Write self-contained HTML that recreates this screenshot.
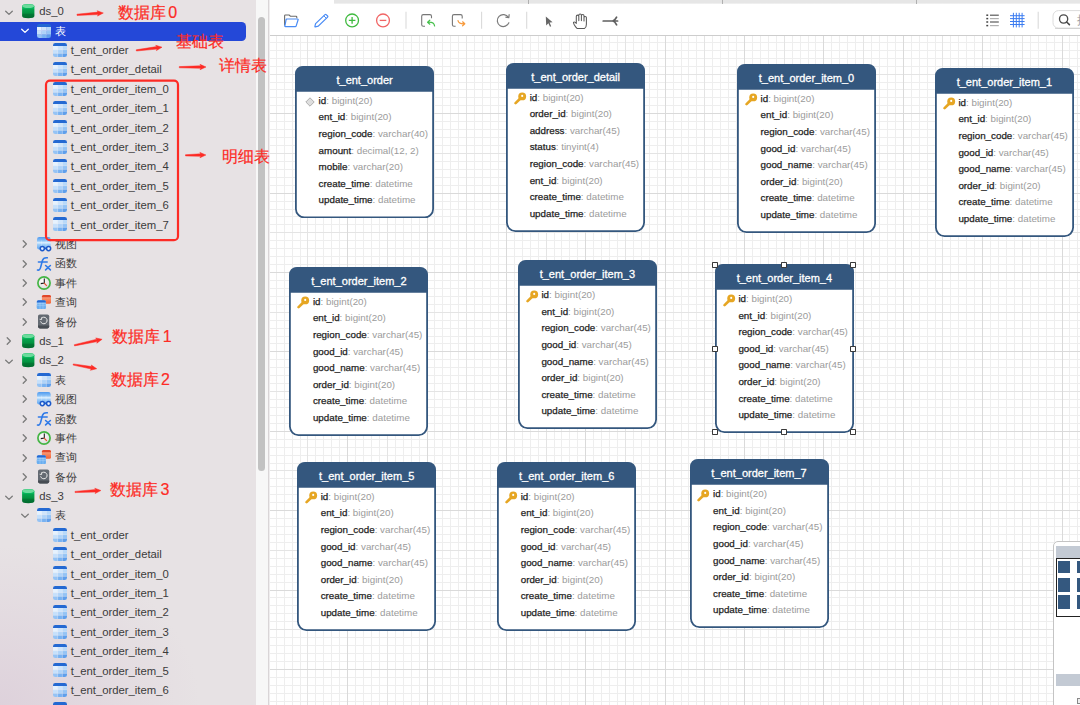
<!DOCTYPE html><html><head><meta charset="utf-8"><style>
html,body{margin:0;padding:0;width:1080px;height:705px;overflow:hidden;background:#fff}
body{position:relative;font-family:"Liberation Sans", sans-serif}
.ic{position:absolute;overflow:visible}
.st{position:absolute;font-size:11.3px;line-height:19px;white-space:nowrap}
.an{position:absolute;font-size:16px;line-height:20px;color:#fd2b25;white-space:nowrap;letter-spacing:0px;-webkit-text-stroke:0.2px #fd2b25}
.tb{position:absolute}
.th{position:absolute;left:0;width:100%;height:26px;color:#fff;font-size:11px;text-align:center;line-height:26px;-webkit-text-stroke:0.3px #fff}
.tbody{position:absolute;left:0;width:100%}
.fr{position:relative;height:16.61px;line-height:16.61px;padding-left:23.5px;font-size:9.8px;white-space:nowrap}
.fn{color:#1e1e1e;-webkit-text-stroke:0.25px #1e1e1e}
.ft{color:#9b9b9b}
.hd{position:absolute;width:6.3px;height:6.3px;box-sizing:border-box;border:1.2px solid #3a3a3a;background:#fff;border-radius:0.8px}
</style></head><body><div style="position:absolute;left:0;top:0;width:255.5px;height:705px;background:#e7e2e4"></div><div style="position:absolute;left:0;top:455px;width:255.5px;height:250px;background:radial-gradient(ellipse 200px 160px at 0px 250px, rgba(214,196,212,0.55), rgba(214,196,212,0) 100%)"></div><div style="position:absolute;left:-6px;top:21.7px;width:251.6px;height:19.3px;background:#2448d8;border-radius:4.5px"></div><svg class="ic" style="left:4.8px;top:10.05px" width="8" height="6" viewBox="0 0 8 6"><path d="M0.7 1.2 L4 4.4 L7.3 1.2" stroke="#7b7b7b" stroke-width="1.3" fill="none" stroke-linecap="round" stroke-linejoin="round"/></svg><svg class="ic" style="left:21.8px;top:3.95px" width="13" height="15" viewBox="0 0 13 15">
<defs><clipPath id="dbc"><path d="M0.1 2.2 Q0.1 0 6.25 0 Q12.4 0 12.4 2.2 L12.4 12.1 Q12.4 14.3 6.25 14.3 Q0.1 14.3 0.1 12.1 Z"/></clipPath>
<linearGradient id="dbg" x1="0" y1="0" x2="0" y2="1"><stop offset="0" stop-color="#10c264"/><stop offset="0.33" stop-color="#03b458"/><stop offset="0.36" stop-color="#06a24d"/><stop offset="0.62" stop-color="#03923f"/><stop offset="0.66" stop-color="#027a35"/><stop offset="1" stop-color="#03692d"/></linearGradient></defs>
<g clip-path="url(#dbc)"><rect x="0" y="0" width="13" height="15" fill="url(#dbg)"/></g>
<ellipse cx="6.25" cy="2.1" rx="6.05" ry="1.9" fill="#6cdb9d"/>
</svg><div class="st" style="left:39.3px;top:2.25px;color:#3b3b3b">ds_0</div><svg class="ic" style="left:20.6px;top:28.44px" width="8" height="6" viewBox="0 0 8 6"><path d="M0.7 1.2 L4 4.4 L7.3 1.2" stroke="#ffffff" stroke-width="1.3" fill="none" stroke-linecap="round" stroke-linejoin="round"/></svg><svg class="ic" style="left:37px;top:24.24px" width="14" height="14" viewBox="0 0 14 14">
<defs><clipPath id="tic"><rect x="0" y="0" width="14" height="14" rx="2.3"/></clipPath></defs>
<g clip-path="url(#tic)"><rect x="0.00" y="3.00" width="4.72" height="3.75" fill="#e6f2fe"/><rect x="4.67" y="3.00" width="4.71" height="3.75" fill="#cfe5fb"/><rect x="9.33" y="3.00" width="4.72" height="3.75" fill="#b9d9f9"/><rect x="0.00" y="6.70" width="4.72" height="3.70" fill="#c6e0fb"/><rect x="4.67" y="6.70" width="4.71" height="3.70" fill="#aed2f8"/><rect x="9.33" y="6.70" width="4.72" height="3.70" fill="#94c3f5"/><rect x="0.00" y="10.35" width="4.72" height="3.70" fill="#95c4f5"/><rect x="4.67" y="10.35" width="4.71" height="3.70" fill="#78b2f1"/><rect x="9.33" y="10.35" width="4.72" height="3.70" fill="#5f9fec"/>
<rect x="0" y="0" width="14" height="3.0" fill="#2469d2"/>
<path d="M4.67 3 V14 M9.33 3 V14 M0 6.7 H14 M0 10.35 H14" stroke="#ffffff" stroke-width="0.45" opacity="0.55"/>
</g></svg><div class="st" style="left:54.6px;top:21.64px;color:#ffffff">表</div><svg class="ic" style="left:52.9px;top:42.84px" width="14" height="14" viewBox="0 0 14 14">
<defs><clipPath id="tic"><rect x="0" y="0" width="14" height="14" rx="2.3"/></clipPath></defs>
<g clip-path="url(#tic)"><rect x="0.00" y="3.00" width="4.72" height="3.75" fill="#e6f2fe"/><rect x="4.67" y="3.00" width="4.71" height="3.75" fill="#cfe5fb"/><rect x="9.33" y="3.00" width="4.72" height="3.75" fill="#b9d9f9"/><rect x="0.00" y="6.70" width="4.72" height="3.70" fill="#c6e0fb"/><rect x="4.67" y="6.70" width="4.71" height="3.70" fill="#aed2f8"/><rect x="9.33" y="6.70" width="4.72" height="3.70" fill="#94c3f5"/><rect x="0.00" y="10.35" width="4.72" height="3.70" fill="#95c4f5"/><rect x="4.67" y="10.35" width="4.71" height="3.70" fill="#78b2f1"/><rect x="9.33" y="10.35" width="4.72" height="3.70" fill="#5f9fec"/>
<rect x="0" y="0" width="14" height="3.0" fill="#2469d2"/>
<path d="M4.67 3 V14 M9.33 3 V14 M0 6.7 H14 M0 10.35 H14" stroke="#ffffff" stroke-width="0.45" opacity="0.55"/>
</g></svg><div class="st" style="left:70.8px;top:41.04px;color:#3b3b3b">t_ent_order</div><svg class="ic" style="left:52.9px;top:62.23px" width="14" height="14" viewBox="0 0 14 14">
<defs><clipPath id="tic"><rect x="0" y="0" width="14" height="14" rx="2.3"/></clipPath></defs>
<g clip-path="url(#tic)"><rect x="0.00" y="3.00" width="4.72" height="3.75" fill="#e6f2fe"/><rect x="4.67" y="3.00" width="4.71" height="3.75" fill="#cfe5fb"/><rect x="9.33" y="3.00" width="4.72" height="3.75" fill="#b9d9f9"/><rect x="0.00" y="6.70" width="4.72" height="3.70" fill="#c6e0fb"/><rect x="4.67" y="6.70" width="4.71" height="3.70" fill="#aed2f8"/><rect x="9.33" y="6.70" width="4.72" height="3.70" fill="#94c3f5"/><rect x="0.00" y="10.35" width="4.72" height="3.70" fill="#95c4f5"/><rect x="4.67" y="10.35" width="4.71" height="3.70" fill="#78b2f1"/><rect x="9.33" y="10.35" width="4.72" height="3.70" fill="#5f9fec"/>
<rect x="0" y="0" width="14" height="3.0" fill="#2469d2"/>
<path d="M4.67 3 V14 M9.33 3 V14 M0 6.7 H14 M0 10.35 H14" stroke="#ffffff" stroke-width="0.45" opacity="0.55"/>
</g></svg><div class="st" style="left:70.8px;top:60.43px;color:#3b3b3b">t_ent_order_detail</div><svg class="ic" style="left:52.9px;top:81.63px" width="14" height="14" viewBox="0 0 14 14">
<defs><clipPath id="tic"><rect x="0" y="0" width="14" height="14" rx="2.3"/></clipPath></defs>
<g clip-path="url(#tic)"><rect x="0.00" y="3.00" width="4.72" height="3.75" fill="#e6f2fe"/><rect x="4.67" y="3.00" width="4.71" height="3.75" fill="#cfe5fb"/><rect x="9.33" y="3.00" width="4.72" height="3.75" fill="#b9d9f9"/><rect x="0.00" y="6.70" width="4.72" height="3.70" fill="#c6e0fb"/><rect x="4.67" y="6.70" width="4.71" height="3.70" fill="#aed2f8"/><rect x="9.33" y="6.70" width="4.72" height="3.70" fill="#94c3f5"/><rect x="0.00" y="10.35" width="4.72" height="3.70" fill="#95c4f5"/><rect x="4.67" y="10.35" width="4.71" height="3.70" fill="#78b2f1"/><rect x="9.33" y="10.35" width="4.72" height="3.70" fill="#5f9fec"/>
<rect x="0" y="0" width="14" height="3.0" fill="#2469d2"/>
<path d="M4.67 3 V14 M9.33 3 V14 M0 6.7 H14 M0 10.35 H14" stroke="#ffffff" stroke-width="0.45" opacity="0.55"/>
</g></svg><div class="st" style="left:70.8px;top:79.83px;color:#3b3b3b">t_ent_order_item_0</div><svg class="ic" style="left:52.9px;top:101.02px" width="14" height="14" viewBox="0 0 14 14">
<defs><clipPath id="tic"><rect x="0" y="0" width="14" height="14" rx="2.3"/></clipPath></defs>
<g clip-path="url(#tic)"><rect x="0.00" y="3.00" width="4.72" height="3.75" fill="#e6f2fe"/><rect x="4.67" y="3.00" width="4.71" height="3.75" fill="#cfe5fb"/><rect x="9.33" y="3.00" width="4.72" height="3.75" fill="#b9d9f9"/><rect x="0.00" y="6.70" width="4.72" height="3.70" fill="#c6e0fb"/><rect x="4.67" y="6.70" width="4.71" height="3.70" fill="#aed2f8"/><rect x="9.33" y="6.70" width="4.72" height="3.70" fill="#94c3f5"/><rect x="0.00" y="10.35" width="4.72" height="3.70" fill="#95c4f5"/><rect x="4.67" y="10.35" width="4.71" height="3.70" fill="#78b2f1"/><rect x="9.33" y="10.35" width="4.72" height="3.70" fill="#5f9fec"/>
<rect x="0" y="0" width="14" height="3.0" fill="#2469d2"/>
<path d="M4.67 3 V14 M9.33 3 V14 M0 6.7 H14 M0 10.35 H14" stroke="#ffffff" stroke-width="0.45" opacity="0.55"/>
</g></svg><div class="st" style="left:70.8px;top:99.22px;color:#3b3b3b">t_ent_order_item_1</div><svg class="ic" style="left:52.9px;top:120.41px" width="14" height="14" viewBox="0 0 14 14">
<defs><clipPath id="tic"><rect x="0" y="0" width="14" height="14" rx="2.3"/></clipPath></defs>
<g clip-path="url(#tic)"><rect x="0.00" y="3.00" width="4.72" height="3.75" fill="#e6f2fe"/><rect x="4.67" y="3.00" width="4.71" height="3.75" fill="#cfe5fb"/><rect x="9.33" y="3.00" width="4.72" height="3.75" fill="#b9d9f9"/><rect x="0.00" y="6.70" width="4.72" height="3.70" fill="#c6e0fb"/><rect x="4.67" y="6.70" width="4.71" height="3.70" fill="#aed2f8"/><rect x="9.33" y="6.70" width="4.72" height="3.70" fill="#94c3f5"/><rect x="0.00" y="10.35" width="4.72" height="3.70" fill="#95c4f5"/><rect x="4.67" y="10.35" width="4.71" height="3.70" fill="#78b2f1"/><rect x="9.33" y="10.35" width="4.72" height="3.70" fill="#5f9fec"/>
<rect x="0" y="0" width="14" height="3.0" fill="#2469d2"/>
<path d="M4.67 3 V14 M9.33 3 V14 M0 6.7 H14 M0 10.35 H14" stroke="#ffffff" stroke-width="0.45" opacity="0.55"/>
</g></svg><div class="st" style="left:70.8px;top:118.61px;color:#3b3b3b">t_ent_order_item_2</div><svg class="ic" style="left:52.9px;top:139.81px" width="14" height="14" viewBox="0 0 14 14">
<defs><clipPath id="tic"><rect x="0" y="0" width="14" height="14" rx="2.3"/></clipPath></defs>
<g clip-path="url(#tic)"><rect x="0.00" y="3.00" width="4.72" height="3.75" fill="#e6f2fe"/><rect x="4.67" y="3.00" width="4.71" height="3.75" fill="#cfe5fb"/><rect x="9.33" y="3.00" width="4.72" height="3.75" fill="#b9d9f9"/><rect x="0.00" y="6.70" width="4.72" height="3.70" fill="#c6e0fb"/><rect x="4.67" y="6.70" width="4.71" height="3.70" fill="#aed2f8"/><rect x="9.33" y="6.70" width="4.72" height="3.70" fill="#94c3f5"/><rect x="0.00" y="10.35" width="4.72" height="3.70" fill="#95c4f5"/><rect x="4.67" y="10.35" width="4.71" height="3.70" fill="#78b2f1"/><rect x="9.33" y="10.35" width="4.72" height="3.70" fill="#5f9fec"/>
<rect x="0" y="0" width="14" height="3.0" fill="#2469d2"/>
<path d="M4.67 3 V14 M9.33 3 V14 M0 6.7 H14 M0 10.35 H14" stroke="#ffffff" stroke-width="0.45" opacity="0.55"/>
</g></svg><div class="st" style="left:70.8px;top:138.01px;color:#3b3b3b">t_ent_order_item_3</div><svg class="ic" style="left:52.9px;top:159.20px" width="14" height="14" viewBox="0 0 14 14">
<defs><clipPath id="tic"><rect x="0" y="0" width="14" height="14" rx="2.3"/></clipPath></defs>
<g clip-path="url(#tic)"><rect x="0.00" y="3.00" width="4.72" height="3.75" fill="#e6f2fe"/><rect x="4.67" y="3.00" width="4.71" height="3.75" fill="#cfe5fb"/><rect x="9.33" y="3.00" width="4.72" height="3.75" fill="#b9d9f9"/><rect x="0.00" y="6.70" width="4.72" height="3.70" fill="#c6e0fb"/><rect x="4.67" y="6.70" width="4.71" height="3.70" fill="#aed2f8"/><rect x="9.33" y="6.70" width="4.72" height="3.70" fill="#94c3f5"/><rect x="0.00" y="10.35" width="4.72" height="3.70" fill="#95c4f5"/><rect x="4.67" y="10.35" width="4.71" height="3.70" fill="#78b2f1"/><rect x="9.33" y="10.35" width="4.72" height="3.70" fill="#5f9fec"/>
<rect x="0" y="0" width="14" height="3.0" fill="#2469d2"/>
<path d="M4.67 3 V14 M9.33 3 V14 M0 6.7 H14 M0 10.35 H14" stroke="#ffffff" stroke-width="0.45" opacity="0.55"/>
</g></svg><div class="st" style="left:70.8px;top:157.40px;color:#3b3b3b">t_ent_order_item_4</div><svg class="ic" style="left:52.9px;top:178.60px" width="14" height="14" viewBox="0 0 14 14">
<defs><clipPath id="tic"><rect x="0" y="0" width="14" height="14" rx="2.3"/></clipPath></defs>
<g clip-path="url(#tic)"><rect x="0.00" y="3.00" width="4.72" height="3.75" fill="#e6f2fe"/><rect x="4.67" y="3.00" width="4.71" height="3.75" fill="#cfe5fb"/><rect x="9.33" y="3.00" width="4.72" height="3.75" fill="#b9d9f9"/><rect x="0.00" y="6.70" width="4.72" height="3.70" fill="#c6e0fb"/><rect x="4.67" y="6.70" width="4.71" height="3.70" fill="#aed2f8"/><rect x="9.33" y="6.70" width="4.72" height="3.70" fill="#94c3f5"/><rect x="0.00" y="10.35" width="4.72" height="3.70" fill="#95c4f5"/><rect x="4.67" y="10.35" width="4.71" height="3.70" fill="#78b2f1"/><rect x="9.33" y="10.35" width="4.72" height="3.70" fill="#5f9fec"/>
<rect x="0" y="0" width="14" height="3.0" fill="#2469d2"/>
<path d="M4.67 3 V14 M9.33 3 V14 M0 6.7 H14 M0 10.35 H14" stroke="#ffffff" stroke-width="0.45" opacity="0.55"/>
</g></svg><div class="st" style="left:70.8px;top:176.80px;color:#3b3b3b">t_ent_order_item_5</div><svg class="ic" style="left:52.9px;top:197.99px" width="14" height="14" viewBox="0 0 14 14">
<defs><clipPath id="tic"><rect x="0" y="0" width="14" height="14" rx="2.3"/></clipPath></defs>
<g clip-path="url(#tic)"><rect x="0.00" y="3.00" width="4.72" height="3.75" fill="#e6f2fe"/><rect x="4.67" y="3.00" width="4.71" height="3.75" fill="#cfe5fb"/><rect x="9.33" y="3.00" width="4.72" height="3.75" fill="#b9d9f9"/><rect x="0.00" y="6.70" width="4.72" height="3.70" fill="#c6e0fb"/><rect x="4.67" y="6.70" width="4.71" height="3.70" fill="#aed2f8"/><rect x="9.33" y="6.70" width="4.72" height="3.70" fill="#94c3f5"/><rect x="0.00" y="10.35" width="4.72" height="3.70" fill="#95c4f5"/><rect x="4.67" y="10.35" width="4.71" height="3.70" fill="#78b2f1"/><rect x="9.33" y="10.35" width="4.72" height="3.70" fill="#5f9fec"/>
<rect x="0" y="0" width="14" height="3.0" fill="#2469d2"/>
<path d="M4.67 3 V14 M9.33 3 V14 M0 6.7 H14 M0 10.35 H14" stroke="#ffffff" stroke-width="0.45" opacity="0.55"/>
</g></svg><div class="st" style="left:70.8px;top:196.19px;color:#3b3b3b">t_ent_order_item_6</div><svg class="ic" style="left:52.9px;top:217.38px" width="14" height="14" viewBox="0 0 14 14">
<defs><clipPath id="tic"><rect x="0" y="0" width="14" height="14" rx="2.3"/></clipPath></defs>
<g clip-path="url(#tic)"><rect x="0.00" y="3.00" width="4.72" height="3.75" fill="#e6f2fe"/><rect x="4.67" y="3.00" width="4.71" height="3.75" fill="#cfe5fb"/><rect x="9.33" y="3.00" width="4.72" height="3.75" fill="#b9d9f9"/><rect x="0.00" y="6.70" width="4.72" height="3.70" fill="#c6e0fb"/><rect x="4.67" y="6.70" width="4.71" height="3.70" fill="#aed2f8"/><rect x="9.33" y="6.70" width="4.72" height="3.70" fill="#94c3f5"/><rect x="0.00" y="10.35" width="4.72" height="3.70" fill="#95c4f5"/><rect x="4.67" y="10.35" width="4.71" height="3.70" fill="#78b2f1"/><rect x="9.33" y="10.35" width="4.72" height="3.70" fill="#5f9fec"/>
<rect x="0" y="0" width="14" height="3.0" fill="#2469d2"/>
<path d="M4.67 3 V14 M9.33 3 V14 M0 6.7 H14 M0 10.35 H14" stroke="#ffffff" stroke-width="0.45" opacity="0.55"/>
</g></svg><div class="st" style="left:70.8px;top:215.58px;color:#3b3b3b">t_ent_order_item_7</div><svg class="ic" style="left:22px;top:240.28px" width="6" height="8" viewBox="0 0 6 8"><path d="M1.2 0.7 L4.4 4 L1.2 7.3" stroke="#7b7b7b" stroke-width="1.3" fill="none" stroke-linecap="round" stroke-linejoin="round"/></svg><svg class="ic" style="left:37px;top:236.78px" width="15" height="15" viewBox="0 0 15 15">
<defs><linearGradient id="vg" x1="0" y1="0" x2="0" y2="1"><stop offset="0" stop-color="#4f9af0"/><stop offset="0.3" stop-color="#8cc2f6"/><stop offset="0.45" stop-color="#dcefff"/><stop offset="0.6" stop-color="#9fcdf8"/><stop offset="1" stop-color="#5aa2f0"/></linearGradient></defs>
<rect x="0" y="0" width="13.7" height="12.6" rx="2.4" fill="url(#vg)"/>
<path d="M4.6 3.5 V12.6 M9.1 3.5 V12.6" stroke="#ffffff" stroke-width="0.45" opacity="0.5"/>
<circle cx="5.3" cy="11.6" r="2.05" fill="#e8f2ff" stroke="#1d59c9" stroke-width="1.5"/><circle cx="11.6" cy="11.6" r="2.05" fill="#e8f2ff" stroke="#1d59c9" stroke-width="1.5"/><path d="M7.3 11.3 H9.6" stroke="#1d59c9" stroke-width="1.6"/>
</svg><div class="st" style="left:54.6px;top:234.98px;color:#3b3b3b">视图</div><svg class="ic" style="left:22px;top:259.67px" width="6" height="8" viewBox="0 0 6 8"><path d="M1.2 0.7 L4.4 4 L1.2 7.3" stroke="#7b7b7b" stroke-width="1.3" fill="none" stroke-linecap="round" stroke-linejoin="round"/></svg><svg class="ic" style="left:37px;top:255.67px" width="15" height="15" viewBox="0 0 15 15">
<path d="M0.5 14 Q2.8 14.6 3.6 11.4 L5.4 4.6 Q6.4 1.4 10.3 1.8" stroke="#2f7ae8" stroke-width="1.6" fill="none" stroke-linecap="round"/>
<path d="M1.4 6.1 H10.2" stroke="#2f7ae8" stroke-width="1.5" stroke-linecap="round"/>
<path d="M8.6 9.5 L13.4 13.9 M13.4 9.5 L8.6 13.9" stroke="#2f7ae8" stroke-width="1.6" stroke-linecap="round"/>
</svg><div class="st" style="left:54.6px;top:254.37px;color:#3b3b3b">函数</div><svg class="ic" style="left:22px;top:279.07px" width="6" height="8" viewBox="0 0 6 8"><path d="M1.2 0.7 L4.4 4 L1.2 7.3" stroke="#7b7b7b" stroke-width="1.3" fill="none" stroke-linecap="round" stroke-linejoin="round"/></svg><svg class="ic" style="left:37px;top:275.57px" width="14" height="14" viewBox="0 0 14 14">
<defs><radialGradient id="cg" cx="0.4" cy="0.35" r="0.7"><stop offset="0" stop-color="#ffffff"/><stop offset="1" stop-color="#d8d8d8"/></radialGradient></defs>
<circle cx="7" cy="7" r="6.1" fill="url(#cg)" stroke="#45b545" stroke-width="1.7"/>
<path d="M7.3 2.6 V7 L3.8 7.6" stroke="#1e1e1e" stroke-width="1.1" fill="none"/>
<path d="M7 7 L9.8 9.9" stroke="#e5502e" stroke-width="1.1"/>
</svg><div class="st" style="left:54.6px;top:273.77px;color:#3b3b3b">事件</div><svg class="ic" style="left:22px;top:298.46px" width="6" height="8" viewBox="0 0 6 8"><path d="M1.2 0.7 L4.4 4 L1.2 7.3" stroke="#7b7b7b" stroke-width="1.3" fill="none" stroke-linecap="round" stroke-linejoin="round"/></svg><svg class="ic" style="left:37px;top:294.96px" width="15" height="14" viewBox="0 0 15 14">
<defs><linearGradient id="qg" x1="0" y1="0" x2="0" y2="1"><stop offset="0" stop-color="#f9b49a"/><stop offset="0.5" stop-color="#f7875e"/><stop offset="1" stop-color="#f0643a"/></linearGradient></defs>
<rect x="4.9" y="0" width="9.1" height="8.8" rx="1.6" fill="url(#qg)"/>
<path d="M4.9 1.6 Q4.9 0 6.5 0 H12.4 Q14 0 14 1.6 V2.2 H4.9 Z" fill="#e0482a"/>
<rect x="-0.2" y="5.2" width="9.1" height="8.8" rx="1.5" fill="#8fc4f6"/>
<rect x="-0.2" y="9.3" width="9.1" height="4.7" rx="1.2" fill="#6aaef0"/>
<path d="M-0.2 6.7 Q-0.2 5.2 1.3 5.2 H7.4 Q8.9 5.2 8.9 6.7 V7.6 H-0.2 Z" fill="#2469d2"/>
<path d="M3 7.6 V14 M6 7.6 V14 M-0.2 10.6 H8.9" stroke="#fff" stroke-width="0.45" opacity="0.5"/>
</svg><div class="st" style="left:54.6px;top:293.16px;color:#3b3b3b">查询</div><svg class="ic" style="left:22px;top:317.85px" width="6" height="8" viewBox="0 0 6 8"><path d="M1.2 0.7 L4.4 4 L1.2 7.3" stroke="#7b7b7b" stroke-width="1.3" fill="none" stroke-linecap="round" stroke-linejoin="round"/></svg><svg class="ic" style="left:37px;top:313.85px" width="14" height="15" viewBox="0 0 14 15">
<rect x="1" y="0.4" width="11.2" height="14" rx="1.8" fill="#646a72"/>
<path d="M1 11.6 H12.2 V12.6 Q12.2 14.4 10.4 14.4 H2.8 Q1 14.4 1 12.6 Z" fill="#474c53"/>
<path d="M4.2 4.4 A3.3 3.3 0 1 1 3.6 7.4" stroke="#ececec" stroke-width="1" fill="none"/>
<path d="M2.6 5.2 L4.6 5.6 L4.8 3.4" stroke="#ececec" stroke-width="0.9" fill="none"/>
</svg><div class="st" style="left:54.6px;top:312.55px;color:#3b3b3b">备份</div><svg class="ic" style="left:6px;top:337.45px" width="6" height="8" viewBox="0 0 6 8"><path d="M1.2 0.7 L4.4 4 L1.2 7.3" stroke="#7b7b7b" stroke-width="1.3" fill="none" stroke-linecap="round" stroke-linejoin="round"/></svg><svg class="ic" style="left:21.8px;top:333.65px" width="13" height="15" viewBox="0 0 13 15">
<defs><clipPath id="dbc"><path d="M0.1 2.2 Q0.1 0 6.25 0 Q12.4 0 12.4 2.2 L12.4 12.1 Q12.4 14.3 6.25 14.3 Q0.1 14.3 0.1 12.1 Z"/></clipPath>
<linearGradient id="dbg" x1="0" y1="0" x2="0" y2="1"><stop offset="0" stop-color="#10c264"/><stop offset="0.33" stop-color="#03b458"/><stop offset="0.36" stop-color="#06a24d"/><stop offset="0.62" stop-color="#03923f"/><stop offset="0.66" stop-color="#027a35"/><stop offset="1" stop-color="#03692d"/></linearGradient></defs>
<g clip-path="url(#dbc)"><rect x="0" y="0" width="13" height="15" fill="url(#dbg)"/></g>
<ellipse cx="6.25" cy="2.1" rx="6.05" ry="1.9" fill="#6cdb9d"/>
</svg><div class="st" style="left:39.3px;top:331.95px;color:#3b3b3b">ds_1</div><svg class="ic" style="left:4.8px;top:359.14px" width="8" height="6" viewBox="0 0 8 6"><path d="M0.7 1.2 L4 4.4 L7.3 1.2" stroke="#7b7b7b" stroke-width="1.3" fill="none" stroke-linecap="round" stroke-linejoin="round"/></svg><svg class="ic" style="left:21.8px;top:353.04px" width="13" height="15" viewBox="0 0 13 15">
<defs><clipPath id="dbc"><path d="M0.1 2.2 Q0.1 0 6.25 0 Q12.4 0 12.4 2.2 L12.4 12.1 Q12.4 14.3 6.25 14.3 Q0.1 14.3 0.1 12.1 Z"/></clipPath>
<linearGradient id="dbg" x1="0" y1="0" x2="0" y2="1"><stop offset="0" stop-color="#10c264"/><stop offset="0.33" stop-color="#03b458"/><stop offset="0.36" stop-color="#06a24d"/><stop offset="0.62" stop-color="#03923f"/><stop offset="0.66" stop-color="#027a35"/><stop offset="1" stop-color="#03692d"/></linearGradient></defs>
<g clip-path="url(#dbc)"><rect x="0" y="0" width="13" height="15" fill="url(#dbg)"/></g>
<ellipse cx="6.25" cy="2.1" rx="6.05" ry="1.9" fill="#6cdb9d"/>
</svg><div class="st" style="left:39.3px;top:351.34px;color:#3b3b3b">ds_2</div><svg class="ic" style="left:22px;top:376.04px" width="6" height="8" viewBox="0 0 6 8"><path d="M1.2 0.7 L4.4 4 L1.2 7.3" stroke="#7b7b7b" stroke-width="1.3" fill="none" stroke-linecap="round" stroke-linejoin="round"/></svg><svg class="ic" style="left:37px;top:372.54px" width="14" height="14" viewBox="0 0 14 14">
<defs><clipPath id="tic"><rect x="0" y="0" width="14" height="14" rx="2.3"/></clipPath></defs>
<g clip-path="url(#tic)"><rect x="0.00" y="3.00" width="4.72" height="3.75" fill="#e6f2fe"/><rect x="4.67" y="3.00" width="4.71" height="3.75" fill="#cfe5fb"/><rect x="9.33" y="3.00" width="4.72" height="3.75" fill="#b9d9f9"/><rect x="0.00" y="6.70" width="4.72" height="3.70" fill="#c6e0fb"/><rect x="4.67" y="6.70" width="4.71" height="3.70" fill="#aed2f8"/><rect x="9.33" y="6.70" width="4.72" height="3.70" fill="#94c3f5"/><rect x="0.00" y="10.35" width="4.72" height="3.70" fill="#95c4f5"/><rect x="4.67" y="10.35" width="4.71" height="3.70" fill="#78b2f1"/><rect x="9.33" y="10.35" width="4.72" height="3.70" fill="#5f9fec"/>
<rect x="0" y="0" width="14" height="3.0" fill="#2469d2"/>
<path d="M4.67 3 V14 M9.33 3 V14 M0 6.7 H14 M0 10.35 H14" stroke="#ffffff" stroke-width="0.45" opacity="0.55"/>
</g></svg><div class="st" style="left:54.6px;top:370.74px;color:#3b3b3b">表</div><svg class="ic" style="left:22px;top:395.43px" width="6" height="8" viewBox="0 0 6 8"><path d="M1.2 0.7 L4.4 4 L1.2 7.3" stroke="#7b7b7b" stroke-width="1.3" fill="none" stroke-linecap="round" stroke-linejoin="round"/></svg><svg class="ic" style="left:37px;top:391.93px" width="15" height="15" viewBox="0 0 15 15">
<defs><linearGradient id="vg" x1="0" y1="0" x2="0" y2="1"><stop offset="0" stop-color="#4f9af0"/><stop offset="0.3" stop-color="#8cc2f6"/><stop offset="0.45" stop-color="#dcefff"/><stop offset="0.6" stop-color="#9fcdf8"/><stop offset="1" stop-color="#5aa2f0"/></linearGradient></defs>
<rect x="0" y="0" width="13.7" height="12.6" rx="2.4" fill="url(#vg)"/>
<path d="M4.6 3.5 V12.6 M9.1 3.5 V12.6" stroke="#ffffff" stroke-width="0.45" opacity="0.5"/>
<circle cx="5.3" cy="11.6" r="2.05" fill="#e8f2ff" stroke="#1d59c9" stroke-width="1.5"/><circle cx="11.6" cy="11.6" r="2.05" fill="#e8f2ff" stroke="#1d59c9" stroke-width="1.5"/><path d="M7.3 11.3 H9.6" stroke="#1d59c9" stroke-width="1.6"/>
</svg><div class="st" style="left:54.6px;top:390.13px;color:#3b3b3b">视图</div><svg class="ic" style="left:22px;top:414.82px" width="6" height="8" viewBox="0 0 6 8"><path d="M1.2 0.7 L4.4 4 L1.2 7.3" stroke="#7b7b7b" stroke-width="1.3" fill="none" stroke-linecap="round" stroke-linejoin="round"/></svg><svg class="ic" style="left:37px;top:410.82px" width="15" height="15" viewBox="0 0 15 15">
<path d="M0.5 14 Q2.8 14.6 3.6 11.4 L5.4 4.6 Q6.4 1.4 10.3 1.8" stroke="#2f7ae8" stroke-width="1.6" fill="none" stroke-linecap="round"/>
<path d="M1.4 6.1 H10.2" stroke="#2f7ae8" stroke-width="1.5" stroke-linecap="round"/>
<path d="M8.6 9.5 L13.4 13.9 M13.4 9.5 L8.6 13.9" stroke="#2f7ae8" stroke-width="1.6" stroke-linecap="round"/>
</svg><div class="st" style="left:54.6px;top:409.52px;color:#3b3b3b">函数</div><svg class="ic" style="left:22px;top:434.22px" width="6" height="8" viewBox="0 0 6 8"><path d="M1.2 0.7 L4.4 4 L1.2 7.3" stroke="#7b7b7b" stroke-width="1.3" fill="none" stroke-linecap="round" stroke-linejoin="round"/></svg><svg class="ic" style="left:37px;top:430.72px" width="14" height="14" viewBox="0 0 14 14">
<defs><radialGradient id="cg" cx="0.4" cy="0.35" r="0.7"><stop offset="0" stop-color="#ffffff"/><stop offset="1" stop-color="#d8d8d8"/></radialGradient></defs>
<circle cx="7" cy="7" r="6.1" fill="url(#cg)" stroke="#45b545" stroke-width="1.7"/>
<path d="M7.3 2.6 V7 L3.8 7.6" stroke="#1e1e1e" stroke-width="1.1" fill="none"/>
<path d="M7 7 L9.8 9.9" stroke="#e5502e" stroke-width="1.1"/>
</svg><div class="st" style="left:54.6px;top:428.92px;color:#3b3b3b">事件</div><svg class="ic" style="left:22px;top:453.61px" width="6" height="8" viewBox="0 0 6 8"><path d="M1.2 0.7 L4.4 4 L1.2 7.3" stroke="#7b7b7b" stroke-width="1.3" fill="none" stroke-linecap="round" stroke-linejoin="round"/></svg><svg class="ic" style="left:37px;top:450.11px" width="15" height="14" viewBox="0 0 15 14">
<defs><linearGradient id="qg" x1="0" y1="0" x2="0" y2="1"><stop offset="0" stop-color="#f9b49a"/><stop offset="0.5" stop-color="#f7875e"/><stop offset="1" stop-color="#f0643a"/></linearGradient></defs>
<rect x="4.9" y="0" width="9.1" height="8.8" rx="1.6" fill="url(#qg)"/>
<path d="M4.9 1.6 Q4.9 0 6.5 0 H12.4 Q14 0 14 1.6 V2.2 H4.9 Z" fill="#e0482a"/>
<rect x="-0.2" y="5.2" width="9.1" height="8.8" rx="1.5" fill="#8fc4f6"/>
<rect x="-0.2" y="9.3" width="9.1" height="4.7" rx="1.2" fill="#6aaef0"/>
<path d="M-0.2 6.7 Q-0.2 5.2 1.3 5.2 H7.4 Q8.9 5.2 8.9 6.7 V7.6 H-0.2 Z" fill="#2469d2"/>
<path d="M3 7.6 V14 M6 7.6 V14 M-0.2 10.6 H8.9" stroke="#fff" stroke-width="0.45" opacity="0.5"/>
</svg><div class="st" style="left:54.6px;top:448.31px;color:#3b3b3b">查询</div><svg class="ic" style="left:22px;top:473.01px" width="6" height="8" viewBox="0 0 6 8"><path d="M1.2 0.7 L4.4 4 L1.2 7.3" stroke="#7b7b7b" stroke-width="1.3" fill="none" stroke-linecap="round" stroke-linejoin="round"/></svg><svg class="ic" style="left:37px;top:469.01px" width="14" height="15" viewBox="0 0 14 15">
<rect x="1" y="0.4" width="11.2" height="14" rx="1.8" fill="#646a72"/>
<path d="M1 11.6 H12.2 V12.6 Q12.2 14.4 10.4 14.4 H2.8 Q1 14.4 1 12.6 Z" fill="#474c53"/>
<path d="M4.2 4.4 A3.3 3.3 0 1 1 3.6 7.4" stroke="#ececec" stroke-width="1" fill="none"/>
<path d="M2.6 5.2 L4.6 5.6 L4.8 3.4" stroke="#ececec" stroke-width="0.9" fill="none"/>
</svg><div class="st" style="left:54.6px;top:467.71px;color:#3b3b3b">备份</div><svg class="ic" style="left:4.8px;top:494.90px" width="8" height="6" viewBox="0 0 8 6"><path d="M0.7 1.2 L4 4.4 L7.3 1.2" stroke="#7b7b7b" stroke-width="1.3" fill="none" stroke-linecap="round" stroke-linejoin="round"/></svg><svg class="ic" style="left:21.8px;top:488.80px" width="13" height="15" viewBox="0 0 13 15">
<defs><clipPath id="dbc"><path d="M0.1 2.2 Q0.1 0 6.25 0 Q12.4 0 12.4 2.2 L12.4 12.1 Q12.4 14.3 6.25 14.3 Q0.1 14.3 0.1 12.1 Z"/></clipPath>
<linearGradient id="dbg" x1="0" y1="0" x2="0" y2="1"><stop offset="0" stop-color="#10c264"/><stop offset="0.33" stop-color="#03b458"/><stop offset="0.36" stop-color="#06a24d"/><stop offset="0.62" stop-color="#03923f"/><stop offset="0.66" stop-color="#027a35"/><stop offset="1" stop-color="#03692d"/></linearGradient></defs>
<g clip-path="url(#dbc)"><rect x="0" y="0" width="13" height="15" fill="url(#dbg)"/></g>
<ellipse cx="6.25" cy="2.1" rx="6.05" ry="1.9" fill="#6cdb9d"/>
</svg><div class="st" style="left:39.3px;top:487.10px;color:#3b3b3b">ds_3</div><svg class="ic" style="left:20.6px;top:513.29px" width="8" height="6" viewBox="0 0 8 6"><path d="M0.7 1.2 L4 4.4 L7.3 1.2" stroke="#7b7b7b" stroke-width="1.3" fill="none" stroke-linecap="round" stroke-linejoin="round"/></svg><svg class="ic" style="left:37px;top:508.29px" width="14" height="14" viewBox="0 0 14 14">
<defs><clipPath id="tic"><rect x="0" y="0" width="14" height="14" rx="2.3"/></clipPath></defs>
<g clip-path="url(#tic)"><rect x="0.00" y="3.00" width="4.72" height="3.75" fill="#e6f2fe"/><rect x="4.67" y="3.00" width="4.71" height="3.75" fill="#cfe5fb"/><rect x="9.33" y="3.00" width="4.72" height="3.75" fill="#b9d9f9"/><rect x="0.00" y="6.70" width="4.72" height="3.70" fill="#c6e0fb"/><rect x="4.67" y="6.70" width="4.71" height="3.70" fill="#aed2f8"/><rect x="9.33" y="6.70" width="4.72" height="3.70" fill="#94c3f5"/><rect x="0.00" y="10.35" width="4.72" height="3.70" fill="#95c4f5"/><rect x="4.67" y="10.35" width="4.71" height="3.70" fill="#78b2f1"/><rect x="9.33" y="10.35" width="4.72" height="3.70" fill="#5f9fec"/>
<rect x="0" y="0" width="14" height="3.0" fill="#2469d2"/>
<path d="M4.67 3 V14 M9.33 3 V14 M0 6.7 H14 M0 10.35 H14" stroke="#ffffff" stroke-width="0.45" opacity="0.55"/>
</g></svg><div class="st" style="left:54.6px;top:506.49px;color:#3b3b3b">表</div><svg class="ic" style="left:52.9px;top:527.69px" width="14" height="14" viewBox="0 0 14 14">
<defs><clipPath id="tic"><rect x="0" y="0" width="14" height="14" rx="2.3"/></clipPath></defs>
<g clip-path="url(#tic)"><rect x="0.00" y="3.00" width="4.72" height="3.75" fill="#e6f2fe"/><rect x="4.67" y="3.00" width="4.71" height="3.75" fill="#cfe5fb"/><rect x="9.33" y="3.00" width="4.72" height="3.75" fill="#b9d9f9"/><rect x="0.00" y="6.70" width="4.72" height="3.70" fill="#c6e0fb"/><rect x="4.67" y="6.70" width="4.71" height="3.70" fill="#aed2f8"/><rect x="9.33" y="6.70" width="4.72" height="3.70" fill="#94c3f5"/><rect x="0.00" y="10.35" width="4.72" height="3.70" fill="#95c4f5"/><rect x="4.67" y="10.35" width="4.71" height="3.70" fill="#78b2f1"/><rect x="9.33" y="10.35" width="4.72" height="3.70" fill="#5f9fec"/>
<rect x="0" y="0" width="14" height="3.0" fill="#2469d2"/>
<path d="M4.67 3 V14 M9.33 3 V14 M0 6.7 H14 M0 10.35 H14" stroke="#ffffff" stroke-width="0.45" opacity="0.55"/>
</g></svg><div class="st" style="left:70.8px;top:525.89px;color:#3b3b3b">t_ent_order</div><svg class="ic" style="left:52.9px;top:547.08px" width="14" height="14" viewBox="0 0 14 14">
<defs><clipPath id="tic"><rect x="0" y="0" width="14" height="14" rx="2.3"/></clipPath></defs>
<g clip-path="url(#tic)"><rect x="0.00" y="3.00" width="4.72" height="3.75" fill="#e6f2fe"/><rect x="4.67" y="3.00" width="4.71" height="3.75" fill="#cfe5fb"/><rect x="9.33" y="3.00" width="4.72" height="3.75" fill="#b9d9f9"/><rect x="0.00" y="6.70" width="4.72" height="3.70" fill="#c6e0fb"/><rect x="4.67" y="6.70" width="4.71" height="3.70" fill="#aed2f8"/><rect x="9.33" y="6.70" width="4.72" height="3.70" fill="#94c3f5"/><rect x="0.00" y="10.35" width="4.72" height="3.70" fill="#95c4f5"/><rect x="4.67" y="10.35" width="4.71" height="3.70" fill="#78b2f1"/><rect x="9.33" y="10.35" width="4.72" height="3.70" fill="#5f9fec"/>
<rect x="0" y="0" width="14" height="3.0" fill="#2469d2"/>
<path d="M4.67 3 V14 M9.33 3 V14 M0 6.7 H14 M0 10.35 H14" stroke="#ffffff" stroke-width="0.45" opacity="0.55"/>
</g></svg><div class="st" style="left:70.8px;top:545.28px;color:#3b3b3b">t_ent_order_detail</div><svg class="ic" style="left:52.9px;top:566.48px" width="14" height="14" viewBox="0 0 14 14">
<defs><clipPath id="tic"><rect x="0" y="0" width="14" height="14" rx="2.3"/></clipPath></defs>
<g clip-path="url(#tic)"><rect x="0.00" y="3.00" width="4.72" height="3.75" fill="#e6f2fe"/><rect x="4.67" y="3.00" width="4.71" height="3.75" fill="#cfe5fb"/><rect x="9.33" y="3.00" width="4.72" height="3.75" fill="#b9d9f9"/><rect x="0.00" y="6.70" width="4.72" height="3.70" fill="#c6e0fb"/><rect x="4.67" y="6.70" width="4.71" height="3.70" fill="#aed2f8"/><rect x="9.33" y="6.70" width="4.72" height="3.70" fill="#94c3f5"/><rect x="0.00" y="10.35" width="4.72" height="3.70" fill="#95c4f5"/><rect x="4.67" y="10.35" width="4.71" height="3.70" fill="#78b2f1"/><rect x="9.33" y="10.35" width="4.72" height="3.70" fill="#5f9fec"/>
<rect x="0" y="0" width="14" height="3.0" fill="#2469d2"/>
<path d="M4.67 3 V14 M9.33 3 V14 M0 6.7 H14 M0 10.35 H14" stroke="#ffffff" stroke-width="0.45" opacity="0.55"/>
</g></svg><div class="st" style="left:70.8px;top:564.68px;color:#3b3b3b">t_ent_order_item_0</div><svg class="ic" style="left:52.9px;top:585.87px" width="14" height="14" viewBox="0 0 14 14">
<defs><clipPath id="tic"><rect x="0" y="0" width="14" height="14" rx="2.3"/></clipPath></defs>
<g clip-path="url(#tic)"><rect x="0.00" y="3.00" width="4.72" height="3.75" fill="#e6f2fe"/><rect x="4.67" y="3.00" width="4.71" height="3.75" fill="#cfe5fb"/><rect x="9.33" y="3.00" width="4.72" height="3.75" fill="#b9d9f9"/><rect x="0.00" y="6.70" width="4.72" height="3.70" fill="#c6e0fb"/><rect x="4.67" y="6.70" width="4.71" height="3.70" fill="#aed2f8"/><rect x="9.33" y="6.70" width="4.72" height="3.70" fill="#94c3f5"/><rect x="0.00" y="10.35" width="4.72" height="3.70" fill="#95c4f5"/><rect x="4.67" y="10.35" width="4.71" height="3.70" fill="#78b2f1"/><rect x="9.33" y="10.35" width="4.72" height="3.70" fill="#5f9fec"/>
<rect x="0" y="0" width="14" height="3.0" fill="#2469d2"/>
<path d="M4.67 3 V14 M9.33 3 V14 M0 6.7 H14 M0 10.35 H14" stroke="#ffffff" stroke-width="0.45" opacity="0.55"/>
</g></svg><div class="st" style="left:70.8px;top:584.07px;color:#3b3b3b">t_ent_order_item_1</div><svg class="ic" style="left:52.9px;top:605.26px" width="14" height="14" viewBox="0 0 14 14">
<defs><clipPath id="tic"><rect x="0" y="0" width="14" height="14" rx="2.3"/></clipPath></defs>
<g clip-path="url(#tic)"><rect x="0.00" y="3.00" width="4.72" height="3.75" fill="#e6f2fe"/><rect x="4.67" y="3.00" width="4.71" height="3.75" fill="#cfe5fb"/><rect x="9.33" y="3.00" width="4.72" height="3.75" fill="#b9d9f9"/><rect x="0.00" y="6.70" width="4.72" height="3.70" fill="#c6e0fb"/><rect x="4.67" y="6.70" width="4.71" height="3.70" fill="#aed2f8"/><rect x="9.33" y="6.70" width="4.72" height="3.70" fill="#94c3f5"/><rect x="0.00" y="10.35" width="4.72" height="3.70" fill="#95c4f5"/><rect x="4.67" y="10.35" width="4.71" height="3.70" fill="#78b2f1"/><rect x="9.33" y="10.35" width="4.72" height="3.70" fill="#5f9fec"/>
<rect x="0" y="0" width="14" height="3.0" fill="#2469d2"/>
<path d="M4.67 3 V14 M9.33 3 V14 M0 6.7 H14 M0 10.35 H14" stroke="#ffffff" stroke-width="0.45" opacity="0.55"/>
</g></svg><div class="st" style="left:70.8px;top:603.46px;color:#3b3b3b">t_ent_order_item_2</div><svg class="ic" style="left:52.9px;top:624.66px" width="14" height="14" viewBox="0 0 14 14">
<defs><clipPath id="tic"><rect x="0" y="0" width="14" height="14" rx="2.3"/></clipPath></defs>
<g clip-path="url(#tic)"><rect x="0.00" y="3.00" width="4.72" height="3.75" fill="#e6f2fe"/><rect x="4.67" y="3.00" width="4.71" height="3.75" fill="#cfe5fb"/><rect x="9.33" y="3.00" width="4.72" height="3.75" fill="#b9d9f9"/><rect x="0.00" y="6.70" width="4.72" height="3.70" fill="#c6e0fb"/><rect x="4.67" y="6.70" width="4.71" height="3.70" fill="#aed2f8"/><rect x="9.33" y="6.70" width="4.72" height="3.70" fill="#94c3f5"/><rect x="0.00" y="10.35" width="4.72" height="3.70" fill="#95c4f5"/><rect x="4.67" y="10.35" width="4.71" height="3.70" fill="#78b2f1"/><rect x="9.33" y="10.35" width="4.72" height="3.70" fill="#5f9fec"/>
<rect x="0" y="0" width="14" height="3.0" fill="#2469d2"/>
<path d="M4.67 3 V14 M9.33 3 V14 M0 6.7 H14 M0 10.35 H14" stroke="#ffffff" stroke-width="0.45" opacity="0.55"/>
</g></svg><div class="st" style="left:70.8px;top:622.86px;color:#3b3b3b">t_ent_order_item_3</div><svg class="ic" style="left:52.9px;top:644.05px" width="14" height="14" viewBox="0 0 14 14">
<defs><clipPath id="tic"><rect x="0" y="0" width="14" height="14" rx="2.3"/></clipPath></defs>
<g clip-path="url(#tic)"><rect x="0.00" y="3.00" width="4.72" height="3.75" fill="#e6f2fe"/><rect x="4.67" y="3.00" width="4.71" height="3.75" fill="#cfe5fb"/><rect x="9.33" y="3.00" width="4.72" height="3.75" fill="#b9d9f9"/><rect x="0.00" y="6.70" width="4.72" height="3.70" fill="#c6e0fb"/><rect x="4.67" y="6.70" width="4.71" height="3.70" fill="#aed2f8"/><rect x="9.33" y="6.70" width="4.72" height="3.70" fill="#94c3f5"/><rect x="0.00" y="10.35" width="4.72" height="3.70" fill="#95c4f5"/><rect x="4.67" y="10.35" width="4.71" height="3.70" fill="#78b2f1"/><rect x="9.33" y="10.35" width="4.72" height="3.70" fill="#5f9fec"/>
<rect x="0" y="0" width="14" height="3.0" fill="#2469d2"/>
<path d="M4.67 3 V14 M9.33 3 V14 M0 6.7 H14 M0 10.35 H14" stroke="#ffffff" stroke-width="0.45" opacity="0.55"/>
</g></svg><div class="st" style="left:70.8px;top:642.25px;color:#3b3b3b">t_ent_order_item_4</div><svg class="ic" style="left:52.9px;top:663.45px" width="14" height="14" viewBox="0 0 14 14">
<defs><clipPath id="tic"><rect x="0" y="0" width="14" height="14" rx="2.3"/></clipPath></defs>
<g clip-path="url(#tic)"><rect x="0.00" y="3.00" width="4.72" height="3.75" fill="#e6f2fe"/><rect x="4.67" y="3.00" width="4.71" height="3.75" fill="#cfe5fb"/><rect x="9.33" y="3.00" width="4.72" height="3.75" fill="#b9d9f9"/><rect x="0.00" y="6.70" width="4.72" height="3.70" fill="#c6e0fb"/><rect x="4.67" y="6.70" width="4.71" height="3.70" fill="#aed2f8"/><rect x="9.33" y="6.70" width="4.72" height="3.70" fill="#94c3f5"/><rect x="0.00" y="10.35" width="4.72" height="3.70" fill="#95c4f5"/><rect x="4.67" y="10.35" width="4.71" height="3.70" fill="#78b2f1"/><rect x="9.33" y="10.35" width="4.72" height="3.70" fill="#5f9fec"/>
<rect x="0" y="0" width="14" height="3.0" fill="#2469d2"/>
<path d="M4.67 3 V14 M9.33 3 V14 M0 6.7 H14 M0 10.35 H14" stroke="#ffffff" stroke-width="0.45" opacity="0.55"/>
</g></svg><div class="st" style="left:70.8px;top:661.65px;color:#3b3b3b">t_ent_order_item_5</div><svg class="ic" style="left:52.9px;top:682.84px" width="14" height="14" viewBox="0 0 14 14">
<defs><clipPath id="tic"><rect x="0" y="0" width="14" height="14" rx="2.3"/></clipPath></defs>
<g clip-path="url(#tic)"><rect x="0.00" y="3.00" width="4.72" height="3.75" fill="#e6f2fe"/><rect x="4.67" y="3.00" width="4.71" height="3.75" fill="#cfe5fb"/><rect x="9.33" y="3.00" width="4.72" height="3.75" fill="#b9d9f9"/><rect x="0.00" y="6.70" width="4.72" height="3.70" fill="#c6e0fb"/><rect x="4.67" y="6.70" width="4.71" height="3.70" fill="#aed2f8"/><rect x="9.33" y="6.70" width="4.72" height="3.70" fill="#94c3f5"/><rect x="0.00" y="10.35" width="4.72" height="3.70" fill="#95c4f5"/><rect x="4.67" y="10.35" width="4.71" height="3.70" fill="#78b2f1"/><rect x="9.33" y="10.35" width="4.72" height="3.70" fill="#5f9fec"/>
<rect x="0" y="0" width="14" height="3.0" fill="#2469d2"/>
<path d="M4.67 3 V14 M9.33 3 V14 M0 6.7 H14 M0 10.35 H14" stroke="#ffffff" stroke-width="0.45" opacity="0.55"/>
</g></svg><div class="st" style="left:70.8px;top:681.04px;color:#3b3b3b">t_ent_order_item_6</div><svg class="ic" style="left:52.9px;top:702.23px" width="14" height="14" viewBox="0 0 14 14">
<defs><clipPath id="tic"><rect x="0" y="0" width="14" height="14" rx="2.3"/></clipPath></defs>
<g clip-path="url(#tic)"><rect x="0.00" y="3.00" width="4.72" height="3.75" fill="#e6f2fe"/><rect x="4.67" y="3.00" width="4.71" height="3.75" fill="#cfe5fb"/><rect x="9.33" y="3.00" width="4.72" height="3.75" fill="#b9d9f9"/><rect x="0.00" y="6.70" width="4.72" height="3.70" fill="#c6e0fb"/><rect x="4.67" y="6.70" width="4.71" height="3.70" fill="#aed2f8"/><rect x="9.33" y="6.70" width="4.72" height="3.70" fill="#94c3f5"/><rect x="0.00" y="10.35" width="4.72" height="3.70" fill="#95c4f5"/><rect x="4.67" y="10.35" width="4.71" height="3.70" fill="#78b2f1"/><rect x="9.33" y="10.35" width="4.72" height="3.70" fill="#5f9fec"/>
<rect x="0" y="0" width="14" height="3.0" fill="#2469d2"/>
<path d="M4.67 3 V14 M9.33 3 V14 M0 6.7 H14 M0 10.35 H14" stroke="#ffffff" stroke-width="0.45" opacity="0.55"/>
</g></svg><div class="st" style="left:70.8px;top:700.43px;color:#3b3b3b">t_ent_order_item_7</div><div style="position:absolute;left:255.5px;top:0;width:12.5px;height:705px;background:#f7f7f7"></div><div style="position:absolute;left:268px;top:0;width:1px;height:705px;background:#d9d5d7"></div><div style="position:absolute;left:269px;top:0;width:1px;height:705px;background:#efedee"></div><div style="position:absolute;left:270px;top:0;width:810px;height:35px;background:#fff;border-bottom:1px solid #cdcdcd"></div><div style="position:absolute;left:334px;top:0;width:746px;height:4.2px;background:linear-gradient(#e6e6e6 0, #e6e6e6 70%, #f6f6f6 100%)"></div><div style="position:absolute;left:528.0px;top:0;width:1px;height:3.5px;background:#b0b0b0"></div><div style="position:absolute;left:721.8px;top:0;width:1px;height:3.5px;background:#b0b0b0"></div><div style="position:absolute;left:915.6px;top:0;width:1px;height:3.5px;background:#b0b0b0"></div><svg width="810" height="35" style="position:absolute;left:270px;top:0" viewBox="270 0 810 35"><path d="M284.6 25.6 V15.8 Q284.6 15 285.4 15 H289.2 L290.4 16.2 H296 Q296.8 16.2 296.8 17 V18.2" stroke="#6b6b6b" stroke-width="1.1" fill="none"/><path d="M286.6 19 H297.6 Q298.4 19 298.1 19.8 L296.2 25.8 Q296 26.6 295.2 26.6 H285.4 Q284.6 26.6 284.9 25.8 L286.1 19.6 Z" stroke="#4a8cf5" stroke-width="1.2" fill="#fff"/><path d="M315.6 23.6 L325 14.6 Q325.6 14 326.2 14.6 L327.6 16 Q328.2 16.6 327.6 17.2 L318.2 26.2 L315.4 26.8 Q314.8 26.9 314.9 26.3 Z" stroke="#4a8cf5" stroke-width="1.2" fill="none"/><path d="M323.8 15.8 L326.4 18.4" stroke="#4a8cf5" stroke-width="1"/><circle cx="352.1" cy="20.4" r="6.4" stroke="#3fba3f" stroke-width="1.3" fill="none"/><path d="M348.8 20.4 H355.4 M352.1 17.1 V23.7" stroke="#3fba3f" stroke-width="1.3"/><circle cx="383" cy="20.4" r="6.4" stroke="#f16464" stroke-width="1.3" fill="none"/><path d="M379.7 20.4 H386.3" stroke="#f16464" stroke-width="1.3"/><path d="M406 11.8 V28.8" stroke="#dadada" stroke-width="1.1"/><path d="M481.6 11.8 V28.8" stroke="#dadada" stroke-width="1.1"/><path d="M526.7 11.8 V28.8" stroke="#dadada" stroke-width="1.1"/><path d="M1038.2 11.8 V28.8" stroke="#dadada" stroke-width="1.1"/><path d="M425 26.3 H423.3 Q421.7 26.3 421.7 24.7 V16.2 Q421.7 14.6 423.3 14.6 H429.9 Q431.5 14.6 431.5 16.2 V18.2" stroke="#777" stroke-width="1.1" fill="none"/><path d="M434.6 26 Q434 21.8 428.2 22.2 M429.8 20.2 L427.6 22.3 L429.8 24.2" stroke="#44c04a" stroke-width="1.2" fill="none" stroke-linecap="round" stroke-linejoin="round"/><path d="M455.6 26.3 H454 Q452.4 26.3 452.4 24.7 V16.2 Q452.4 14.6 454 14.6 H460.6 Q462.2 14.6 462.2 16.2 V18.6" stroke="#777" stroke-width="1.1" fill="none"/><path d="M458 20.6 Q458.6 24 464.4 23.8 M462.6 21.8 L464.8 23.8 L462.6 25.8" stroke="#f79a3c" stroke-width="1.2" fill="none" stroke-linecap="round" stroke-linejoin="round"/><path d="M508.4 17.4 A6 6 0 1 0 509 22.4" stroke="#7a7a7a" stroke-width="1.2" fill="none"/><path d="M505.4 17.2 L508.8 17.6 L509.2 14.2" stroke="#7a7a7a" stroke-width="1.2" fill="none" stroke-linejoin="round"/><path d="M545.8 16.6 L552.6 22.2 L549.6 22.6 L551.2 26.2 L550 26.8 L548.4 23.2 L546.2 25.4 Z" fill="#666"/><path d="M577 28.4 Q575.6 27 574.4 25 L573.6 23.2 Q573.2 22 574.3 21.9 Q575.2 21.9 576.3 23.4 V16.4 Q576.3 15.1 577.55 15.1 Q578.8 15.1 578.8 16.4 V20.6 V15.2 Q578.8 13.9 580.1 13.9 Q581.4 13.9 581.4 15.2 V20.6 V15.7 Q581.4 14.4 582.7 14.4 Q584 14.4 584 15.7 V21 V17.6 Q584 16.4 585.2 16.4 Q586.4 16.4 586.4 17.6 V24.2 Q586.4 27.2 584.6 28.4 Z" stroke="#5a5a5a" stroke-width="1.05" fill="#fff" stroke-linejoin="round"/><path d="M603.2 21 H617.6 M612.4 21 Q614.6 21 616.6 17.2 M612.4 21 Q614.6 21 616.6 24.8" stroke="#5f5f5f" stroke-width="1.7" fill="none" stroke-linecap="round"/><rect x="986.3" y="14.45" width="1.9" height="1.5" fill="#444"/><path d="M990 15.2 H998.8" stroke="#5a5a5a" stroke-width="1.2"/><rect x="986.3" y="17.85" width="1.9" height="1.5" fill="#444"/><path d="M990 18.6 H998.8" stroke="#b0b0b0" stroke-width="1.2"/><rect x="986.3" y="21.25" width="1.9" height="1.5" fill="#444"/><path d="M990 22.0 H998.8" stroke="#5a5a5a" stroke-width="1.2"/><rect x="986.3" y="24.85" width="1.9" height="1.5" fill="#444"/><path d="M990 25.6 H998.8" stroke="#b0b0b0" stroke-width="1.2"/><path d="M1013.4 12.8 V27.4" stroke="#3c7cf0" stroke-width="1"/><path d="M1016.3 12.8 V27.4" stroke="#3c7cf0" stroke-width="1"/><path d="M1019.2 12.8 V27.4" stroke="#3c7cf0" stroke-width="1"/><path d="M1022.1 12.8 V27.4" stroke="#3c7cf0" stroke-width="1"/><path d="M1010 15.7 H1024.6" stroke="#3c7cf0" stroke-width="1"/><path d="M1010 18.6 H1024.6" stroke="#3c7cf0" stroke-width="1"/><path d="M1010 21.5 H1024.6" stroke="#3c7cf0" stroke-width="1"/><path d="M1010 24.5 H1024.6" stroke="#3c7cf0" stroke-width="1"/><rect x="1053" y="10.6" width="40" height="17.6" rx="5.5" fill="#fff" stroke="#dcdcdc" stroke-width="1"/><path d="M1055 28.4 H1090" stroke="#c8c8c8" stroke-width="0.8"/><circle cx="1063.6" cy="19" r="4.1" stroke="#4a4a4a" stroke-width="1.35" fill="none"/><path d="M1066.6 22 L1069.4 24.7" stroke="#4a4a4a" stroke-width="1.6" stroke-linecap="round"/></svg><div style="position:absolute;left:1076.6px;top:12.6px;font-size:12px;line-height:14px;color:#9a9a9a">搜</div><div style="position:absolute;left:270px;top:36px;width:810px;height:669px;overflow:hidden;background:#fff"><svg width="810" height="669" style="position:absolute;left:0;top:0"><line x1="6.50" y1="0" x2="6.50" y2="700" stroke="#eeeeee" stroke-width="1"/><line x1="14.50" y1="0" x2="14.50" y2="700" stroke="#eeeeee" stroke-width="1"/><line x1="22.50" y1="0" x2="22.50" y2="700" stroke="#eeeeee" stroke-width="1"/><line x1="30.50" y1="0" x2="30.50" y2="700" stroke="#eeeeee" stroke-width="1"/><line x1="45.50" y1="0" x2="45.50" y2="700" stroke="#eeeeee" stroke-width="1"/><line x1="53.50" y1="0" x2="53.50" y2="700" stroke="#eeeeee" stroke-width="1"/><line x1="61.50" y1="0" x2="61.50" y2="700" stroke="#eeeeee" stroke-width="1"/><line x1="69.50" y1="0" x2="69.50" y2="700" stroke="#eeeeee" stroke-width="1"/><line x1="85.50" y1="0" x2="85.50" y2="700" stroke="#eeeeee" stroke-width="1"/><line x1="93.50" y1="0" x2="93.50" y2="700" stroke="#eeeeee" stroke-width="1"/><line x1="101.50" y1="0" x2="101.50" y2="700" stroke="#eeeeee" stroke-width="1"/><line x1="109.50" y1="0" x2="109.50" y2="700" stroke="#eeeeee" stroke-width="1"/><line x1="125.50" y1="0" x2="125.50" y2="700" stroke="#eeeeee" stroke-width="1"/><line x1="133.50" y1="0" x2="133.50" y2="700" stroke="#eeeeee" stroke-width="1"/><line x1="141.50" y1="0" x2="141.50" y2="700" stroke="#eeeeee" stroke-width="1"/><line x1="149.50" y1="0" x2="149.50" y2="700" stroke="#eeeeee" stroke-width="1"/><line x1="164.50" y1="0" x2="164.50" y2="700" stroke="#eeeeee" stroke-width="1"/><line x1="172.50" y1="0" x2="172.50" y2="700" stroke="#eeeeee" stroke-width="1"/><line x1="180.50" y1="0" x2="180.50" y2="700" stroke="#eeeeee" stroke-width="1"/><line x1="188.50" y1="0" x2="188.50" y2="700" stroke="#eeeeee" stroke-width="1"/><line x1="204.50" y1="0" x2="204.50" y2="700" stroke="#eeeeee" stroke-width="1"/><line x1="212.50" y1="0" x2="212.50" y2="700" stroke="#eeeeee" stroke-width="1"/><line x1="220.50" y1="0" x2="220.50" y2="700" stroke="#eeeeee" stroke-width="1"/><line x1="228.50" y1="0" x2="228.50" y2="700" stroke="#eeeeee" stroke-width="1"/><line x1="244.50" y1="0" x2="244.50" y2="700" stroke="#eeeeee" stroke-width="1"/><line x1="252.50" y1="0" x2="252.50" y2="700" stroke="#eeeeee" stroke-width="1"/><line x1="260.50" y1="0" x2="260.50" y2="700" stroke="#eeeeee" stroke-width="1"/><line x1="268.50" y1="0" x2="268.50" y2="700" stroke="#eeeeee" stroke-width="1"/><line x1="284.50" y1="0" x2="284.50" y2="700" stroke="#eeeeee" stroke-width="1"/><line x1="291.50" y1="0" x2="291.50" y2="700" stroke="#eeeeee" stroke-width="1"/><line x1="299.50" y1="0" x2="299.50" y2="700" stroke="#eeeeee" stroke-width="1"/><line x1="307.50" y1="0" x2="307.50" y2="700" stroke="#eeeeee" stroke-width="1"/><line x1="323.50" y1="0" x2="323.50" y2="700" stroke="#eeeeee" stroke-width="1"/><line x1="331.50" y1="0" x2="331.50" y2="700" stroke="#eeeeee" stroke-width="1"/><line x1="339.50" y1="0" x2="339.50" y2="700" stroke="#eeeeee" stroke-width="1"/><line x1="347.50" y1="0" x2="347.50" y2="700" stroke="#eeeeee" stroke-width="1"/><line x1="363.50" y1="0" x2="363.50" y2="700" stroke="#eeeeee" stroke-width="1"/><line x1="371.50" y1="0" x2="371.50" y2="700" stroke="#eeeeee" stroke-width="1"/><line x1="379.50" y1="0" x2="379.50" y2="700" stroke="#eeeeee" stroke-width="1"/><line x1="387.50" y1="0" x2="387.50" y2="700" stroke="#eeeeee" stroke-width="1"/><line x1="403.50" y1="0" x2="403.50" y2="700" stroke="#eeeeee" stroke-width="1"/><line x1="411.50" y1="0" x2="411.50" y2="700" stroke="#eeeeee" stroke-width="1"/><line x1="418.50" y1="0" x2="418.50" y2="700" stroke="#eeeeee" stroke-width="1"/><line x1="426.50" y1="0" x2="426.50" y2="700" stroke="#eeeeee" stroke-width="1"/><line x1="442.50" y1="0" x2="442.50" y2="700" stroke="#eeeeee" stroke-width="1"/><line x1="450.50" y1="0" x2="450.50" y2="700" stroke="#eeeeee" stroke-width="1"/><line x1="458.50" y1="0" x2="458.50" y2="700" stroke="#eeeeee" stroke-width="1"/><line x1="466.50" y1="0" x2="466.50" y2="700" stroke="#eeeeee" stroke-width="1"/><line x1="482.50" y1="0" x2="482.50" y2="700" stroke="#eeeeee" stroke-width="1"/><line x1="490.50" y1="0" x2="490.50" y2="700" stroke="#eeeeee" stroke-width="1"/><line x1="498.50" y1="0" x2="498.50" y2="700" stroke="#eeeeee" stroke-width="1"/><line x1="506.50" y1="0" x2="506.50" y2="700" stroke="#eeeeee" stroke-width="1"/><line x1="522.50" y1="0" x2="522.50" y2="700" stroke="#eeeeee" stroke-width="1"/><line x1="530.50" y1="0" x2="530.50" y2="700" stroke="#eeeeee" stroke-width="1"/><line x1="538.50" y1="0" x2="538.50" y2="700" stroke="#eeeeee" stroke-width="1"/><line x1="545.50" y1="0" x2="545.50" y2="700" stroke="#eeeeee" stroke-width="1"/><line x1="561.50" y1="0" x2="561.50" y2="700" stroke="#eeeeee" stroke-width="1"/><line x1="569.50" y1="0" x2="569.50" y2="700" stroke="#eeeeee" stroke-width="1"/><line x1="577.50" y1="0" x2="577.50" y2="700" stroke="#eeeeee" stroke-width="1"/><line x1="585.50" y1="0" x2="585.50" y2="700" stroke="#eeeeee" stroke-width="1"/><line x1="601.50" y1="0" x2="601.50" y2="700" stroke="#eeeeee" stroke-width="1"/><line x1="609.50" y1="0" x2="609.50" y2="700" stroke="#eeeeee" stroke-width="1"/><line x1="617.50" y1="0" x2="617.50" y2="700" stroke="#eeeeee" stroke-width="1"/><line x1="625.50" y1="0" x2="625.50" y2="700" stroke="#eeeeee" stroke-width="1"/><line x1="641.50" y1="0" x2="641.50" y2="700" stroke="#eeeeee" stroke-width="1"/><line x1="649.50" y1="0" x2="649.50" y2="700" stroke="#eeeeee" stroke-width="1"/><line x1="657.50" y1="0" x2="657.50" y2="700" stroke="#eeeeee" stroke-width="1"/><line x1="665.50" y1="0" x2="665.50" y2="700" stroke="#eeeeee" stroke-width="1"/><line x1="680.50" y1="0" x2="680.50" y2="700" stroke="#eeeeee" stroke-width="1"/><line x1="688.50" y1="0" x2="688.50" y2="700" stroke="#eeeeee" stroke-width="1"/><line x1="696.50" y1="0" x2="696.50" y2="700" stroke="#eeeeee" stroke-width="1"/><line x1="704.50" y1="0" x2="704.50" y2="700" stroke="#eeeeee" stroke-width="1"/><line x1="720.50" y1="0" x2="720.50" y2="700" stroke="#eeeeee" stroke-width="1"/><line x1="728.50" y1="0" x2="728.50" y2="700" stroke="#eeeeee" stroke-width="1"/><line x1="736.50" y1="0" x2="736.50" y2="700" stroke="#eeeeee" stroke-width="1"/><line x1="744.50" y1="0" x2="744.50" y2="700" stroke="#eeeeee" stroke-width="1"/><line x1="760.50" y1="0" x2="760.50" y2="700" stroke="#eeeeee" stroke-width="1"/><line x1="768.50" y1="0" x2="768.50" y2="700" stroke="#eeeeee" stroke-width="1"/><line x1="776.50" y1="0" x2="776.50" y2="700" stroke="#eeeeee" stroke-width="1"/><line x1="784.50" y1="0" x2="784.50" y2="700" stroke="#eeeeee" stroke-width="1"/><line x1="799.50" y1="0" x2="799.50" y2="700" stroke="#eeeeee" stroke-width="1"/><line x1="807.50" y1="0" x2="807.50" y2="700" stroke="#eeeeee" stroke-width="1"/><line x1="0" y1="6.50" x2="820" y2="6.50" stroke="#eeeeee" stroke-width="1"/><line x1="0" y1="14.50" x2="820" y2="14.50" stroke="#eeeeee" stroke-width="1"/><line x1="0" y1="22.50" x2="820" y2="22.50" stroke="#eeeeee" stroke-width="1"/><line x1="0" y1="30.50" x2="820" y2="30.50" stroke="#eeeeee" stroke-width="1"/><line x1="0" y1="46.50" x2="820" y2="46.50" stroke="#eeeeee" stroke-width="1"/><line x1="0" y1="53.50" x2="820" y2="53.50" stroke="#eeeeee" stroke-width="1"/><line x1="0" y1="61.50" x2="820" y2="61.50" stroke="#eeeeee" stroke-width="1"/><line x1="0" y1="69.50" x2="820" y2="69.50" stroke="#eeeeee" stroke-width="1"/><line x1="0" y1="85.50" x2="820" y2="85.50" stroke="#eeeeee" stroke-width="1"/><line x1="0" y1="93.50" x2="820" y2="93.50" stroke="#eeeeee" stroke-width="1"/><line x1="0" y1="101.50" x2="820" y2="101.50" stroke="#eeeeee" stroke-width="1"/><line x1="0" y1="109.50" x2="820" y2="109.50" stroke="#eeeeee" stroke-width="1"/><line x1="0" y1="125.50" x2="820" y2="125.50" stroke="#eeeeee" stroke-width="1"/><line x1="0" y1="133.50" x2="820" y2="133.50" stroke="#eeeeee" stroke-width="1"/><line x1="0" y1="141.50" x2="820" y2="141.50" stroke="#eeeeee" stroke-width="1"/><line x1="0" y1="149.50" x2="820" y2="149.50" stroke="#eeeeee" stroke-width="1"/><line x1="0" y1="165.50" x2="820" y2="165.50" stroke="#eeeeee" stroke-width="1"/><line x1="0" y1="173.50" x2="820" y2="173.50" stroke="#eeeeee" stroke-width="1"/><line x1="0" y1="180.50" x2="820" y2="180.50" stroke="#eeeeee" stroke-width="1"/><line x1="0" y1="188.50" x2="820" y2="188.50" stroke="#eeeeee" stroke-width="1"/><line x1="0" y1="204.50" x2="820" y2="204.50" stroke="#eeeeee" stroke-width="1"/><line x1="0" y1="212.50" x2="820" y2="212.50" stroke="#eeeeee" stroke-width="1"/><line x1="0" y1="220.50" x2="820" y2="220.50" stroke="#eeeeee" stroke-width="1"/><line x1="0" y1="228.50" x2="820" y2="228.50" stroke="#eeeeee" stroke-width="1"/><line x1="0" y1="244.50" x2="820" y2="244.50" stroke="#eeeeee" stroke-width="1"/><line x1="0" y1="252.50" x2="820" y2="252.50" stroke="#eeeeee" stroke-width="1"/><line x1="0" y1="260.50" x2="820" y2="260.50" stroke="#eeeeee" stroke-width="1"/><line x1="0" y1="268.50" x2="820" y2="268.50" stroke="#eeeeee" stroke-width="1"/><line x1="0" y1="284.50" x2="820" y2="284.50" stroke="#eeeeee" stroke-width="1"/><line x1="0" y1="292.50" x2="820" y2="292.50" stroke="#eeeeee" stroke-width="1"/><line x1="0" y1="300.50" x2="820" y2="300.50" stroke="#eeeeee" stroke-width="1"/><line x1="0" y1="307.50" x2="820" y2="307.50" stroke="#eeeeee" stroke-width="1"/><line x1="0" y1="323.50" x2="820" y2="323.50" stroke="#eeeeee" stroke-width="1"/><line x1="0" y1="331.50" x2="820" y2="331.50" stroke="#eeeeee" stroke-width="1"/><line x1="0" y1="339.50" x2="820" y2="339.50" stroke="#eeeeee" stroke-width="1"/><line x1="0" y1="347.50" x2="820" y2="347.50" stroke="#eeeeee" stroke-width="1"/><line x1="0" y1="363.50" x2="820" y2="363.50" stroke="#eeeeee" stroke-width="1"/><line x1="0" y1="371.50" x2="820" y2="371.50" stroke="#eeeeee" stroke-width="1"/><line x1="0" y1="379.50" x2="820" y2="379.50" stroke="#eeeeee" stroke-width="1"/><line x1="0" y1="387.50" x2="820" y2="387.50" stroke="#eeeeee" stroke-width="1"/><line x1="0" y1="403.50" x2="820" y2="403.50" stroke="#eeeeee" stroke-width="1"/><line x1="0" y1="411.50" x2="820" y2="411.50" stroke="#eeeeee" stroke-width="1"/><line x1="0" y1="419.50" x2="820" y2="419.50" stroke="#eeeeee" stroke-width="1"/><line x1="0" y1="427.50" x2="820" y2="427.50" stroke="#eeeeee" stroke-width="1"/><line x1="0" y1="442.50" x2="820" y2="442.50" stroke="#eeeeee" stroke-width="1"/><line x1="0" y1="450.50" x2="820" y2="450.50" stroke="#eeeeee" stroke-width="1"/><line x1="0" y1="458.50" x2="820" y2="458.50" stroke="#eeeeee" stroke-width="1"/><line x1="0" y1="466.50" x2="820" y2="466.50" stroke="#eeeeee" stroke-width="1"/><line x1="0" y1="482.50" x2="820" y2="482.50" stroke="#eeeeee" stroke-width="1"/><line x1="0" y1="490.50" x2="820" y2="490.50" stroke="#eeeeee" stroke-width="1"/><line x1="0" y1="498.50" x2="820" y2="498.50" stroke="#eeeeee" stroke-width="1"/><line x1="0" y1="506.50" x2="820" y2="506.50" stroke="#eeeeee" stroke-width="1"/><line x1="0" y1="522.50" x2="820" y2="522.50" stroke="#eeeeee" stroke-width="1"/><line x1="0" y1="530.50" x2="820" y2="530.50" stroke="#eeeeee" stroke-width="1"/><line x1="0" y1="538.50" x2="820" y2="538.50" stroke="#eeeeee" stroke-width="1"/><line x1="0" y1="546.50" x2="820" y2="546.50" stroke="#eeeeee" stroke-width="1"/><line x1="0" y1="561.50" x2="820" y2="561.50" stroke="#eeeeee" stroke-width="1"/><line x1="0" y1="569.50" x2="820" y2="569.50" stroke="#eeeeee" stroke-width="1"/><line x1="0" y1="577.50" x2="820" y2="577.50" stroke="#eeeeee" stroke-width="1"/><line x1="0" y1="585.50" x2="820" y2="585.50" stroke="#eeeeee" stroke-width="1"/><line x1="0" y1="601.50" x2="820" y2="601.50" stroke="#eeeeee" stroke-width="1"/><line x1="0" y1="609.50" x2="820" y2="609.50" stroke="#eeeeee" stroke-width="1"/><line x1="0" y1="617.50" x2="820" y2="617.50" stroke="#eeeeee" stroke-width="1"/><line x1="0" y1="625.50" x2="820" y2="625.50" stroke="#eeeeee" stroke-width="1"/><line x1="0" y1="641.50" x2="820" y2="641.50" stroke="#eeeeee" stroke-width="1"/><line x1="0" y1="649.50" x2="820" y2="649.50" stroke="#eeeeee" stroke-width="1"/><line x1="0" y1="657.50" x2="820" y2="657.50" stroke="#eeeeee" stroke-width="1"/><line x1="0" y1="665.50" x2="820" y2="665.50" stroke="#eeeeee" stroke-width="1"/><line x1="37.50" y1="0" x2="37.50" y2="700" stroke="#e4e4e4" stroke-width="1"/><line x1="117.50" y1="0" x2="117.50" y2="700" stroke="#e4e4e4" stroke-width="1"/><line x1="196.50" y1="0" x2="196.50" y2="700" stroke="#e4e4e4" stroke-width="1"/><line x1="276.50" y1="0" x2="276.50" y2="700" stroke="#e4e4e4" stroke-width="1"/><line x1="355.50" y1="0" x2="355.50" y2="700" stroke="#e4e4e4" stroke-width="1"/><line x1="434.50" y1="0" x2="434.50" y2="700" stroke="#e4e4e4" stroke-width="1"/><line x1="514.50" y1="0" x2="514.50" y2="700" stroke="#e4e4e4" stroke-width="1"/><line x1="593.50" y1="0" x2="593.50" y2="700" stroke="#e4e4e4" stroke-width="1"/><line x1="672.50" y1="0" x2="672.50" y2="700" stroke="#e4e4e4" stroke-width="1"/><line x1="752.50" y1="0" x2="752.50" y2="700" stroke="#e4e4e4" stroke-width="1"/><line x1="0" y1="38.50" x2="820" y2="38.50" stroke="#e4e4e4" stroke-width="1"/><line x1="0" y1="117.50" x2="820" y2="117.50" stroke="#e4e4e4" stroke-width="1"/><line x1="0" y1="196.50" x2="820" y2="196.50" stroke="#e4e4e4" stroke-width="1"/><line x1="0" y1="276.50" x2="820" y2="276.50" stroke="#e4e4e4" stroke-width="1"/><line x1="0" y1="355.50" x2="820" y2="355.50" stroke="#e4e4e4" stroke-width="1"/><line x1="0" y1="434.50" x2="820" y2="434.50" stroke="#e4e4e4" stroke-width="1"/><line x1="0" y1="514.50" x2="820" y2="514.50" stroke="#e4e4e4" stroke-width="1"/><line x1="0" y1="593.50" x2="820" y2="593.50" stroke="#e4e4e4" stroke-width="1"/><line x1="77.50" y1="0" x2="77.50" y2="700" stroke="#dadada" stroke-width="1"/><line x1="157.50" y1="0" x2="157.50" y2="700" stroke="#dadada" stroke-width="1"/><line x1="236.50" y1="0" x2="236.50" y2="700" stroke="#dadada" stroke-width="1"/><line x1="315.50" y1="0" x2="315.50" y2="700" stroke="#dadada" stroke-width="1"/><line x1="395.50" y1="0" x2="395.50" y2="700" stroke="#dadada" stroke-width="1"/><line x1="474.50" y1="0" x2="474.50" y2="700" stroke="#dadada" stroke-width="1"/><line x1="553.50" y1="0" x2="553.50" y2="700" stroke="#dadada" stroke-width="1"/><line x1="633.50" y1="0" x2="633.50" y2="700" stroke="#dadada" stroke-width="1"/><line x1="712.50" y1="0" x2="712.50" y2="700" stroke="#dadada" stroke-width="1"/><line x1="792.50" y1="0" x2="792.50" y2="700" stroke="#dadada" stroke-width="1"/><line x1="0" y1="77.50" x2="820" y2="77.50" stroke="#dadada" stroke-width="1"/><line x1="0" y1="157.50" x2="820" y2="157.50" stroke="#dadada" stroke-width="1"/><line x1="0" y1="236.50" x2="820" y2="236.50" stroke="#dadada" stroke-width="1"/><line x1="0" y1="315.50" x2="820" y2="315.50" stroke="#dadada" stroke-width="1"/><line x1="0" y1="395.50" x2="820" y2="395.50" stroke="#dadada" stroke-width="1"/><line x1="0" y1="474.50" x2="820" y2="474.50" stroke="#dadada" stroke-width="1"/><line x1="0" y1="554.50" x2="820" y2="554.50" stroke="#dadada" stroke-width="1"/><line x1="0" y1="633.50" x2="820" y2="633.50" stroke="#dadada" stroke-width="1"/></svg><div class="tb" style="left:25.10px;top:29.90px;width:139.0px;height:152.37px"><svg width="139.0" height="152.37" style="position:absolute;left:0;top:0"><rect x="0.9" y="0.9" width="137.20" height="150.57" rx="8.5" fill="#fff" stroke="#34577e" stroke-width="1.8"/><path d="M0 25.7 V8.5 Q0 0 8.5 0 H130.50 Q139.0 0 139.0 8.5 V25.7 Z" fill="#34577e"/></svg><div class="th" style="top:1.3px">t_ent_order</div><div class="tbody" style="top:26.95px"><div class="fr"><svg style="position:absolute;left:10px;top:4px" width="10" height="10" viewBox="0 0 10 10"><path d="M5 0.8 L9.2 5 L5 9.2 L0.8 5 Z" fill="#dedede" stroke="#a8a8a8" stroke-width="0.9"/></svg><span class="fn">id</span><span class="ft">: bigint(20)</span></div><div class="fr"><span class="fn">ent_id</span><span class="ft">: bigint(20)</span></div><div class="fr"><span class="fn">region_code</span><span class="ft">: varchar(40)</span></div><div class="fr"><span class="fn">amount</span><span class="ft">: decimal(12, 2)</span></div><div class="fr"><span class="fn">mobile</span><span class="ft">: varchar(20)</span></div><div class="fr"><span class="fn">create_time</span><span class="ft">: datetime</span></div><div class="fr"><span class="fn">update_time</span><span class="ft">: datetime</span></div></div></div><div class="tb" style="left:236.15px;top:26.70px;width:139.0px;height:168.98px"><svg width="139.0" height="168.98" style="position:absolute;left:0;top:0"><rect x="0.9" y="0.9" width="137.20" height="167.18" rx="8.5" fill="#fff" stroke="#34577e" stroke-width="1.8"/><path d="M0 25.7 V8.5 Q0 0 8.5 0 H130.50 Q139.0 0 139.0 8.5 V25.7 Z" fill="#34577e"/></svg><div class="th" style="top:1.3px">t_ent_order_detail</div><div class="tbody" style="top:26.95px"><div class="fr"><svg style="position:absolute;left:7.8px;top:2.6px" width="13" height="13" viewBox="0 0 13 13"><circle cx="8.2" cy="4.4" r="3.95" fill="#e6a623"/><circle cx="8.2" cy="3.9" r="1.05" fill="#fff"/><path d="M5.8 7.0 L1.6 11.2" stroke="#e6a623" stroke-width="2.6" stroke-linecap="round"/></svg><span class="fn">id</span><span class="ft">: bigint(20)</span></div><div class="fr"><span class="fn">order_id</span><span class="ft">: bigint(20)</span></div><div class="fr"><span class="fn">address</span><span class="ft">: varchar(45)</span></div><div class="fr"><span class="fn">status</span><span class="ft">: tinyint(4)</span></div><div class="fr"><span class="fn">region_code</span><span class="ft">: varchar(45)</span></div><div class="fr"><span class="fn">ent_id</span><span class="ft">: bigint(20)</span></div><div class="fr"><span class="fn">create_time</span><span class="ft">: datetime</span></div><div class="fr"><span class="fn">update_time</span><span class="ft">: datetime</span></div></div></div><div class="tb" style="left:467.00px;top:27.80px;width:139.0px;height:168.98px"><svg width="139.0" height="168.98" style="position:absolute;left:0;top:0"><rect x="0.9" y="0.9" width="137.20" height="167.18" rx="8.5" fill="#fff" stroke="#34577e" stroke-width="1.8"/><path d="M0 25.7 V8.5 Q0 0 8.5 0 H130.50 Q139.0 0 139.0 8.5 V25.7 Z" fill="#34577e"/></svg><div class="th" style="top:1.3px">t_ent_order_item_0</div><div class="tbody" style="top:26.95px"><div class="fr"><svg style="position:absolute;left:7.8px;top:2.6px" width="13" height="13" viewBox="0 0 13 13"><circle cx="8.2" cy="4.4" r="3.95" fill="#e6a623"/><circle cx="8.2" cy="3.9" r="1.05" fill="#fff"/><path d="M5.8 7.0 L1.6 11.2" stroke="#e6a623" stroke-width="2.6" stroke-linecap="round"/></svg><span class="fn">id</span><span class="ft">: bigint(20)</span></div><div class="fr"><span class="fn">ent_id</span><span class="ft">: bigint(20)</span></div><div class="fr"><span class="fn">region_code</span><span class="ft">: varchar(45)</span></div><div class="fr"><span class="fn">good_id</span><span class="ft">: varchar(45)</span></div><div class="fr"><span class="fn">good_name</span><span class="ft">: varchar(45)</span></div><div class="fr"><span class="fn">order_id</span><span class="ft">: bigint(20)</span></div><div class="fr"><span class="fn">create_time</span><span class="ft">: datetime</span></div><div class="fr"><span class="fn">update_time</span><span class="ft">: datetime</span></div></div></div><div class="tb" style="left:664.90px;top:31.90px;width:139.0px;height:168.98px"><svg width="139.0" height="168.98" style="position:absolute;left:0;top:0"><rect x="0.9" y="0.9" width="137.20" height="167.18" rx="8.5" fill="#fff" stroke="#34577e" stroke-width="1.8"/><path d="M0 25.7 V8.5 Q0 0 8.5 0 H130.50 Q139.0 0 139.0 8.5 V25.7 Z" fill="#34577e"/></svg><div class="th" style="top:1.3px">t_ent_order_item_1</div><div class="tbody" style="top:26.95px"><div class="fr"><svg style="position:absolute;left:7.8px;top:2.6px" width="13" height="13" viewBox="0 0 13 13"><circle cx="8.2" cy="4.4" r="3.95" fill="#e6a623"/><circle cx="8.2" cy="3.9" r="1.05" fill="#fff"/><path d="M5.8 7.0 L1.6 11.2" stroke="#e6a623" stroke-width="2.6" stroke-linecap="round"/></svg><span class="fn">id</span><span class="ft">: bigint(20)</span></div><div class="fr"><span class="fn">ent_id</span><span class="ft">: bigint(20)</span></div><div class="fr"><span class="fn">region_code</span><span class="ft">: varchar(45)</span></div><div class="fr"><span class="fn">good_id</span><span class="ft">: varchar(45)</span></div><div class="fr"><span class="fn">good_name</span><span class="ft">: varchar(45)</span></div><div class="fr"><span class="fn">order_id</span><span class="ft">: bigint(20)</span></div><div class="fr"><span class="fn">create_time</span><span class="ft">: datetime</span></div><div class="fr"><span class="fn">update_time</span><span class="ft">: datetime</span></div></div></div><div class="tb" style="left:19.40px;top:230.80px;width:139.0px;height:168.98px"><svg width="139.0" height="168.98" style="position:absolute;left:0;top:0"><rect x="0.9" y="0.9" width="137.20" height="167.18" rx="8.5" fill="#fff" stroke="#34577e" stroke-width="1.8"/><path d="M0 25.7 V8.5 Q0 0 8.5 0 H130.50 Q139.0 0 139.0 8.5 V25.7 Z" fill="#34577e"/></svg><div class="th" style="top:1.3px">t_ent_order_item_2</div><div class="tbody" style="top:26.95px"><div class="fr"><svg style="position:absolute;left:7.8px;top:2.6px" width="13" height="13" viewBox="0 0 13 13"><circle cx="8.2" cy="4.4" r="3.95" fill="#e6a623"/><circle cx="8.2" cy="3.9" r="1.05" fill="#fff"/><path d="M5.8 7.0 L1.6 11.2" stroke="#e6a623" stroke-width="2.6" stroke-linecap="round"/></svg><span class="fn">id</span><span class="ft">: bigint(20)</span></div><div class="fr"><span class="fn">ent_id</span><span class="ft">: bigint(20)</span></div><div class="fr"><span class="fn">region_code</span><span class="ft">: varchar(45)</span></div><div class="fr"><span class="fn">good_id</span><span class="ft">: varchar(45)</span></div><div class="fr"><span class="fn">good_name</span><span class="ft">: varchar(45)</span></div><div class="fr"><span class="fn">order_id</span><span class="ft">: bigint(20)</span></div><div class="fr"><span class="fn">create_time</span><span class="ft">: datetime</span></div><div class="fr"><span class="fn">update_time</span><span class="ft">: datetime</span></div></div></div><div class="tb" style="left:247.90px;top:224.20px;width:139.0px;height:168.98px"><svg width="139.0" height="168.98" style="position:absolute;left:0;top:0"><rect x="0.9" y="0.9" width="137.20" height="167.18" rx="8.5" fill="#fff" stroke="#34577e" stroke-width="1.8"/><path d="M0 25.7 V8.5 Q0 0 8.5 0 H130.50 Q139.0 0 139.0 8.5 V25.7 Z" fill="#34577e"/></svg><div class="th" style="top:1.3px">t_ent_order_item_3</div><div class="tbody" style="top:26.95px"><div class="fr"><svg style="position:absolute;left:7.8px;top:2.6px" width="13" height="13" viewBox="0 0 13 13"><circle cx="8.2" cy="4.4" r="3.95" fill="#e6a623"/><circle cx="8.2" cy="3.9" r="1.05" fill="#fff"/><path d="M5.8 7.0 L1.6 11.2" stroke="#e6a623" stroke-width="2.6" stroke-linecap="round"/></svg><span class="fn">id</span><span class="ft">: bigint(20)</span></div><div class="fr"><span class="fn">ent_id</span><span class="ft">: bigint(20)</span></div><div class="fr"><span class="fn">region_code</span><span class="ft">: varchar(45)</span></div><div class="fr"><span class="fn">good_id</span><span class="ft">: varchar(45)</span></div><div class="fr"><span class="fn">good_name</span><span class="ft">: varchar(45)</span></div><div class="fr"><span class="fn">order_id</span><span class="ft">: bigint(20)</span></div><div class="fr"><span class="fn">create_time</span><span class="ft">: datetime</span></div><div class="fr"><span class="fn">update_time</span><span class="ft">: datetime</span></div></div></div><div class="tb" style="left:444.90px;top:228.10px;width:139.0px;height:168.98px"><svg width="139.0" height="168.98" style="position:absolute;left:0;top:0"><rect x="0.9" y="0.9" width="137.20" height="167.18" rx="8.5" fill="#fff" stroke="#34577e" stroke-width="1.8"/><path d="M0 25.7 V8.5 Q0 0 8.5 0 H130.50 Q139.0 0 139.0 8.5 V25.7 Z" fill="#34577e"/></svg><div class="th" style="top:1.3px">t_ent_order_item_4</div><div class="tbody" style="top:26.95px"><div class="fr"><svg style="position:absolute;left:7.8px;top:2.6px" width="13" height="13" viewBox="0 0 13 13"><circle cx="8.2" cy="4.4" r="3.95" fill="#e6a623"/><circle cx="8.2" cy="3.9" r="1.05" fill="#fff"/><path d="M5.8 7.0 L1.6 11.2" stroke="#e6a623" stroke-width="2.6" stroke-linecap="round"/></svg><span class="fn">id</span><span class="ft">: bigint(20)</span></div><div class="fr"><span class="fn">ent_id</span><span class="ft">: bigint(20)</span></div><div class="fr"><span class="fn">region_code</span><span class="ft">: varchar(45)</span></div><div class="fr"><span class="fn">good_id</span><span class="ft">: varchar(45)</span></div><div class="fr"><span class="fn">good_name</span><span class="ft">: varchar(45)</span></div><div class="fr"><span class="fn">order_id</span><span class="ft">: bigint(20)</span></div><div class="fr"><span class="fn">create_time</span><span class="ft">: datetime</span></div><div class="fr"><span class="fn">update_time</span><span class="ft">: datetime</span></div></div></div><div class="hd" style="left:442.15px;top:226.15px"></div><div class="hd" style="left:442.15px;top:309.64px"></div><div class="hd" style="left:442.15px;top:393.13px"></div><div class="hd" style="left:510.95px;top:226.15px"></div><div class="hd" style="left:510.95px;top:393.13px"></div><div class="hd" style="left:579.75px;top:226.15px"></div><div class="hd" style="left:579.75px;top:309.64px"></div><div class="hd" style="left:579.75px;top:393.13px"></div><div class="tb" style="left:27.20px;top:425.80px;width:139.0px;height:168.98px"><svg width="139.0" height="168.98" style="position:absolute;left:0;top:0"><rect x="0.9" y="0.9" width="137.20" height="167.18" rx="8.5" fill="#fff" stroke="#34577e" stroke-width="1.8"/><path d="M0 25.7 V8.5 Q0 0 8.5 0 H130.50 Q139.0 0 139.0 8.5 V25.7 Z" fill="#34577e"/></svg><div class="th" style="top:1.3px">t_ent_order_item_5</div><div class="tbody" style="top:26.95px"><div class="fr"><svg style="position:absolute;left:7.8px;top:2.6px" width="13" height="13" viewBox="0 0 13 13"><circle cx="8.2" cy="4.4" r="3.95" fill="#e6a623"/><circle cx="8.2" cy="3.9" r="1.05" fill="#fff"/><path d="M5.8 7.0 L1.6 11.2" stroke="#e6a623" stroke-width="2.6" stroke-linecap="round"/></svg><span class="fn">id</span><span class="ft">: bigint(20)</span></div><div class="fr"><span class="fn">ent_id</span><span class="ft">: bigint(20)</span></div><div class="fr"><span class="fn">region_code</span><span class="ft">: varchar(45)</span></div><div class="fr"><span class="fn">good_id</span><span class="ft">: varchar(45)</span></div><div class="fr"><span class="fn">good_name</span><span class="ft">: varchar(45)</span></div><div class="fr"><span class="fn">order_id</span><span class="ft">: bigint(20)</span></div><div class="fr"><span class="fn">create_time</span><span class="ft">: datetime</span></div><div class="fr"><span class="fn">update_time</span><span class="ft">: datetime</span></div></div></div><div class="tb" style="left:227.20px;top:425.80px;width:139.0px;height:168.98px"><svg width="139.0" height="168.98" style="position:absolute;left:0;top:0"><rect x="0.9" y="0.9" width="137.20" height="167.18" rx="8.5" fill="#fff" stroke="#34577e" stroke-width="1.8"/><path d="M0 25.7 V8.5 Q0 0 8.5 0 H130.50 Q139.0 0 139.0 8.5 V25.7 Z" fill="#34577e"/></svg><div class="th" style="top:1.3px">t_ent_order_item_6</div><div class="tbody" style="top:26.95px"><div class="fr"><svg style="position:absolute;left:7.8px;top:2.6px" width="13" height="13" viewBox="0 0 13 13"><circle cx="8.2" cy="4.4" r="3.95" fill="#e6a623"/><circle cx="8.2" cy="3.9" r="1.05" fill="#fff"/><path d="M5.8 7.0 L1.6 11.2" stroke="#e6a623" stroke-width="2.6" stroke-linecap="round"/></svg><span class="fn">id</span><span class="ft">: bigint(20)</span></div><div class="fr"><span class="fn">ent_id</span><span class="ft">: bigint(20)</span></div><div class="fr"><span class="fn">region_code</span><span class="ft">: varchar(45)</span></div><div class="fr"><span class="fn">good_id</span><span class="ft">: varchar(45)</span></div><div class="fr"><span class="fn">good_name</span><span class="ft">: varchar(45)</span></div><div class="fr"><span class="fn">order_id</span><span class="ft">: bigint(20)</span></div><div class="fr"><span class="fn">create_time</span><span class="ft">: datetime</span></div><div class="fr"><span class="fn">update_time</span><span class="ft">: datetime</span></div></div></div><div class="tb" style="left:419.50px;top:423.20px;width:139.0px;height:168.98px"><svg width="139.0" height="168.98" style="position:absolute;left:0;top:0"><rect x="0.9" y="0.9" width="137.20" height="167.18" rx="8.5" fill="#fff" stroke="#34577e" stroke-width="1.8"/><path d="M0 25.7 V8.5 Q0 0 8.5 0 H130.50 Q139.0 0 139.0 8.5 V25.7 Z" fill="#34577e"/></svg><div class="th" style="top:1.3px">t_ent_order_item_7</div><div class="tbody" style="top:26.95px"><div class="fr"><svg style="position:absolute;left:7.8px;top:2.6px" width="13" height="13" viewBox="0 0 13 13"><circle cx="8.2" cy="4.4" r="3.95" fill="#e6a623"/><circle cx="8.2" cy="3.9" r="1.05" fill="#fff"/><path d="M5.8 7.0 L1.6 11.2" stroke="#e6a623" stroke-width="2.6" stroke-linecap="round"/></svg><span class="fn">id</span><span class="ft">: bigint(20)</span></div><div class="fr"><span class="fn">ent_id</span><span class="ft">: bigint(20)</span></div><div class="fr"><span class="fn">region_code</span><span class="ft">: varchar(45)</span></div><div class="fr"><span class="fn">good_id</span><span class="ft">: varchar(45)</span></div><div class="fr"><span class="fn">good_name</span><span class="ft">: varchar(45)</span></div><div class="fr"><span class="fn">order_id</span><span class="ft">: bigint(20)</span></div><div class="fr"><span class="fn">create_time</span><span class="ft">: datetime</span></div><div class="fr"><span class="fn">update_time</span><span class="ft">: datetime</span></div></div></div></div><div style="position:absolute;left:1052.6px;top:541.1px;width:40px;height:180px;background:#fff;border:1px solid #c4c4c4;border-radius:5px;box-sizing:border-box"></div><div style="position:absolute;left:1056px;top:546px;width:30px;height:12px;background:#c3cad4"></div><div style="position:absolute;left:1056.2px;top:558px;width:30px;height:58.7px;border:1.2px solid #222;box-sizing:border-box"></div><div style="position:absolute;left:1058.4px;top:560.5px;width:12.1px;height:12.8px;background:#34587f"></div><div style="position:absolute;left:1076.7px;top:560.5px;width:10px;height:12.8px;background:#34587f"></div><div style="position:absolute;left:1058.4px;top:577.8px;width:12.1px;height:14px;background:#34587f"></div><div style="position:absolute;left:1076.7px;top:577.8px;width:10px;height:14px;background:#34587f"></div><div style="position:absolute;left:1058.4px;top:595px;width:12.1px;height:14.1px;background:#34587f"></div><div style="position:absolute;left:1076.7px;top:595px;width:10px;height:14.1px;background:#34587f"></div><div style="position:absolute;left:1056px;top:674px;width:30px;height:11.8px;background:#c3cad4"></div><div style="position:absolute;left:1077px;top:697.5px;width:6px;height:6px;border:1px solid #888;background:#eee;box-sizing:border-box"></div><div style="position:absolute;left:258.1px;top:17.4px;width:7.1px;height:453.4px;background:#c2c2c2;border-radius:3.6px"></div><svg width="280" height="705" style="position:absolute;left:0;top:0;overflow:visible"><polygon points="77.04,15.40 98.20,14.60 97.50,16.10 103.30,13.00 97.13,10.72 98.03,12.11 76.96,14.20" fill="#fd2b25" stroke="#fd2b25" stroke-width="0.5" stroke-linejoin="round"/><polygon points="136.37,51.00 156.99,49.08 156.38,50.62 162.00,47.20 155.71,45.26 156.69,46.60 136.23,49.80" fill="#fd2b25" stroke="#fd2b25" stroke-width="0.5" stroke-linejoin="round"/><polygon points="179.30,67.80 200.81,68.29 200.02,69.74 206.00,67.00 199.98,64.35 200.79,65.79 179.30,66.60" fill="#fd2b25" stroke="#fd2b25" stroke-width="0.5" stroke-linejoin="round"/><polygon points="185.51,155.90 200.72,156.33 199.94,157.79 205.90,155.00 199.86,152.39 200.68,153.83 185.49,154.70" fill="#fd2b25" stroke="#fd2b25" stroke-width="0.5" stroke-linejoin="round"/><polygon points="74.53,345.89 97.28,341.62 96.81,343.21 102.10,339.30 95.66,337.93 96.75,339.18 74.27,344.71" fill="#fd2b25" stroke="#fd2b25" stroke-width="0.5" stroke-linejoin="round"/><polygon points="73.09,365.09 91.36,369.02 90.32,370.30 96.70,368.70 91.27,364.99 91.80,366.55 73.31,363.91" fill="#fd2b25" stroke="#fd2b25" stroke-width="0.5" stroke-linejoin="round"/><polygon points="75.03,492.60 95.78,492.05 95.07,493.54 100.90,490.50 94.75,488.15 95.64,489.55 74.97,491.40" fill="#fd2b25" stroke="#fd2b25" stroke-width="0.5" stroke-linejoin="round"/><rect x="46" y="80.7" width="132" height="159.5" rx="4" fill="none" stroke="#fd2b25" stroke-width="2.2"/></svg><div class="an" style="left:117.8px;top:2.6px">数据库<span style="margin-left:2.5px">0</span></div><div class="an" style="left:176px;top:32.3px">基础表</div><div class="an" style="left:219px;top:55.6px">详情表</div><div class="an" style="left:221.7px;top:146.6px">明细表</div><div class="an" style="left:112.3px;top:327.2px">数据库<span style="margin-left:2.5px">1</span></div><div class="an" style="left:110.5px;top:369.6px">数据库<span style="margin-left:2.5px">2</span></div><div class="an" style="left:110px;top:480.4px">数据库<span style="margin-left:2.5px">3</span></div></body></html>
